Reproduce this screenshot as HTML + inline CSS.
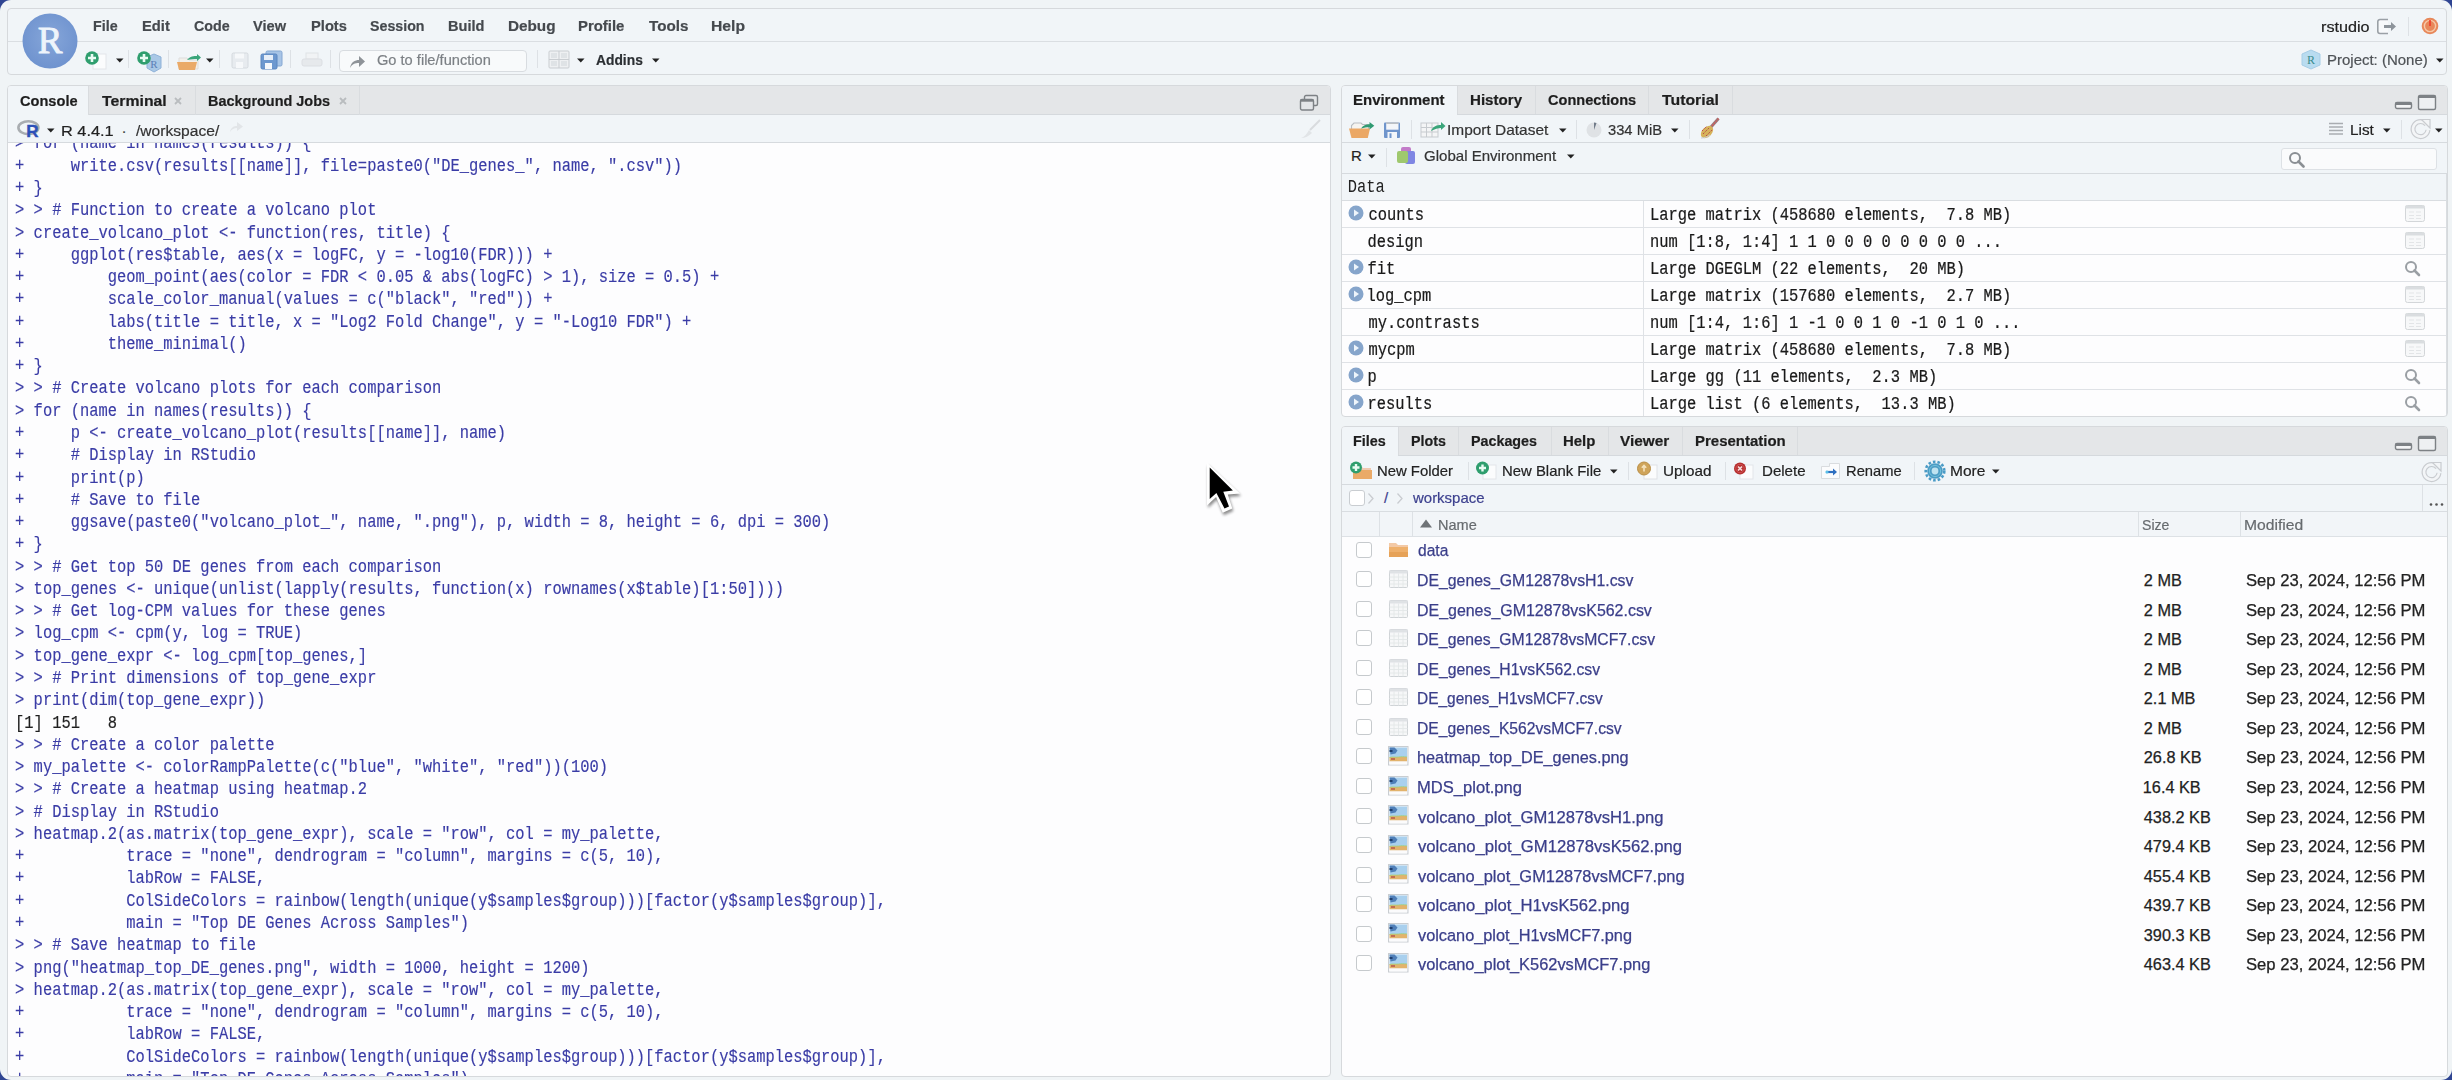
<!DOCTYPE html><html><head><meta charset="utf-8"><style>
html,body{margin:0;padding:0;}
body{width:2452px;height:1080px;overflow:hidden;position:relative;background:#2f4592;font-family:'Liberation Sans', sans-serif;}
.t{position:absolute;white-space:pre;}
</style></head><body><div style="position:absolute;left:0px;top:0px;width:2452px;height:1080px;background:#f0f4f6;border-radius:11px;"></div><div style="position:absolute;left:7px;top:8px;width:2440px;height:67px;background:#f1f5f8;border:1px solid #d6d9dc;border-radius:4px;box-sizing:border-box;"></div><div style="position:absolute;left:8px;top:41px;width:2438px;height:1px;background:#dadee2"></div><svg style="position:absolute;left:22px;top:13px" width="56" height="56" viewBox="0 0 56 56"><defs><radialGradient id="rg" cx="50%" cy="45%" r="55%"><stop offset="0" stop-color="#86a6d9"/><stop offset="1" stop-color="#6f93cf"/></radialGradient></defs>
<circle cx="28" cy="28" r="27.5" fill="url(#rg)"/>
<text x="28" y="40" text-anchor="middle" font-family="Liberation Serif" font-size="37" fill="#eef4fb" stroke="#eef4fb" stroke-width="0.8">R</text></svg><div class="t" style="left:93.38px;top:17.32px;font-size:15.5px;line-height:17.31px;font-weight:bold;color:#45494e;font-family:'Liberation Sans', sans-serif;letter-spacing:0px;transform:scale(0.9202,1.000);transform-origin:0 14.03px;-webkit-text-stroke:0.2px #45494e;">File</div><div class="t" style="left:142.05px;top:17.32px;font-size:15.5px;line-height:17.31px;font-weight:bold;color:#45494e;font-family:'Liberation Sans', sans-serif;letter-spacing:0px;transform:scale(0.9497,1.000);transform-origin:0 14.03px;-webkit-text-stroke:0.2px #45494e;">Edit</div><div class="t" style="left:193.60px;top:17.32px;font-size:15.5px;line-height:17.31px;font-weight:bold;color:#45494e;font-family:'Liberation Sans', sans-serif;letter-spacing:0px;transform:scale(0.9200,1.000);transform-origin:0 14.03px;-webkit-text-stroke:0.2px #45494e;">Code</div><div class="t" style="left:253.30px;top:17.32px;font-size:15.5px;line-height:17.31px;font-weight:bold;color:#45494e;font-family:'Liberation Sans', sans-serif;letter-spacing:0px;transform:scale(0.9421,1.000);transform-origin:0 14.03px;-webkit-text-stroke:0.2px #45494e;">View</div><div class="t" style="left:310.65px;top:17.32px;font-size:15.5px;line-height:17.31px;font-weight:bold;color:#45494e;font-family:'Liberation Sans', sans-serif;letter-spacing:0px;transform:scale(0.9483,1.000);transform-origin:0 14.03px;-webkit-text-stroke:0.2px #45494e;">Plots</div><div class="t" style="left:370.40px;top:17.32px;font-size:15.5px;line-height:17.31px;font-weight:bold;color:#45494e;font-family:'Liberation Sans', sans-serif;letter-spacing:0px;transform:scale(0.9174,1.000);transform-origin:0 14.03px;-webkit-text-stroke:0.2px #45494e;">Session</div><div class="t" style="left:447.96px;top:17.32px;font-size:15.5px;line-height:17.31px;font-weight:bold;color:#45494e;font-family:'Liberation Sans', sans-serif;letter-spacing:0px;transform:scale(0.9390,1.000);transform-origin:0 14.03px;-webkit-text-stroke:0.2px #45494e;">Build</div><div class="t" style="left:507.61px;top:17.32px;font-size:15.5px;line-height:17.31px;font-weight:bold;color:#45494e;font-family:'Liberation Sans', sans-serif;letter-spacing:0px;transform:scale(0.9861,1.000);transform-origin:0 14.03px;-webkit-text-stroke:0.2px #45494e;">Debug</div><div class="t" style="left:578.04px;top:17.32px;font-size:15.5px;line-height:17.31px;font-weight:bold;color:#45494e;font-family:'Liberation Sans', sans-serif;letter-spacing:0px;transform:scale(0.9598,1.000);transform-origin:0 14.03px;-webkit-text-stroke:0.2px #45494e;">Profile</div><div class="t" style="left:649.00px;top:17.32px;font-size:15.5px;line-height:17.31px;font-weight:bold;color:#45494e;font-family:'Liberation Sans', sans-serif;letter-spacing:0px;transform:scale(0.9808,1.000);transform-origin:0 14.03px;-webkit-text-stroke:0.2px #45494e;">Tools</div><div class="t" style="left:710.99px;top:17.32px;font-size:15.5px;line-height:17.31px;font-weight:bold;color:#45494e;font-family:'Liberation Sans', sans-serif;letter-spacing:0px;transform:scale(1.0118,1.000);transform-origin:0 14.03px;-webkit-text-stroke:0.2px #45494e;">Help</div><div class="t" style="left:2320.94px;top:18.30px;font-size:15.3px;line-height:17.09px;font-weight:normal;color:#222;font-family:'Liberation Sans', sans-serif;letter-spacing:0px;transform:scale(1.0584,1.000);transform-origin:0 13.85px;-webkit-text-stroke:0.2px #222;">rstudio</div><svg style="position:absolute;left:2376px;top:17px" width="22" height="19" viewBox="0 0 22 19"><path d="M12 2.5H4a2.2 2.2 0 0 0-2.2 2.2v9.6A2.2 2.2 0 0 0 4 16.5h8" fill="#f7f9fb" stroke="#9aa0a6" stroke-width="1.6"/><path d="M8 8h7V5l5 4.5-5 4.5v-3H8z" fill="#8d949b"/></svg><div style="position:absolute;left:2408px;top:17px;width:1px;height:19px;background:#dde1e5"></div><svg style="position:absolute;left:2421px;top:17px" width="18" height="18" viewBox="0 0 18 18"><circle cx="9" cy="9" r="8.3" fill="#e8885a"/><circle cx="9" cy="9" r="5.6" fill="none" stroke="#f6c9a8" stroke-width="1.4"/><rect x="8.2" y="3" width="1.6" height="6" fill="#f03a2a"/></svg><svg style="position:absolute;left:84px;top:50px" width="26" height="20" viewBox="0 0 26 20"><rect x="9" y="4" width="13" height="15" fill="#fbfcfd" stroke="#e3e6e9"/><circle cx="8" cy="8" r="6.8" fill="#2f9e6e"/><path d="M8 4v8M4 8h8" stroke="#e9fbf3" stroke-width="2.6"/></svg><svg style="position:absolute;left:116px;top:58px" width="8" height="5" viewBox="0 0 8 5"><path d="M0 0.5H7.5L3.75 4.5Z" fill="#222"/></svg><div style="position:absolute;left:128px;top:50px;width:1px;height:18px;background:#dde1e5"></div><svg style="position:absolute;left:136px;top:50px" width="28" height="23" viewBox="0 0 28 23"><path d="M11 7l7-3 7 3v11l-7 4-7-4z" fill="#a9c8e6" stroke="#8fb2d8"/><text x="18" y="18" font-family="Liberation Serif" font-size="11" fill="#5b7fb6" text-anchor="middle">R</text><circle cx="8" cy="8" r="6.8" fill="#2f9e6e"/><path d="M8 4v8M4 8h8" stroke="#e9fbf3" stroke-width="2.6"/></svg><div style="position:absolute;left:168px;top:50px;width:1px;height:18px;background:#dde1e5"></div><svg style="position:absolute;left:176px;top:51px" width="28" height="20" viewBox="0 0 28 20"><path d="M3 7h8l2 2h9v9H3z" fill="#f3f0ea" stroke="#ddd"/><path d="M1 11h20l-2 8H3z" fill="#eaaa68"/><path d="M11 9c3-4 7-4 10-4v-2l4 3.5-4 3.5v-2c-3 0-6 0-10 1z" fill="#3aa57a"/></svg><svg style="position:absolute;left:206px;top:58px" width="8" height="5" viewBox="0 0 8 5"><path d="M0 0.5H7.5L3.75 4.5Z" fill="#222"/></svg><div style="position:absolute;left:219px;top:50px;width:1px;height:18px;background:#dde1e5"></div><svg style="position:absolute;left:231px;top:52px" width="19" height="17" viewBox="0 0 19 17"><rect x="1" y="1" width="16" height="15" rx="1.5" fill="#e7ebef" stroke="#d4d9de"/><rect x="4" y="1.5" width="9" height="5" fill="#f6f8fa"/><rect x="5" y="10" width="7" height="6" fill="#f6f8fa"/></svg><svg style="position:absolute;left:260px;top:50px" width="24" height="20" viewBox="0 0 24 20"><rect x="6" y="1" width="16" height="15" rx="1.5" fill="#a7c4e6" stroke="#84a7d2"/><rect x="1" y="4" width="16" height="15" rx="1.5" fill="#6d98cf" stroke="#5a86c0"/><rect x="4" y="5" width="9" height="5" fill="#e6eef8"/><rect x="5" y="13" width="7" height="6" fill="#f5f8fc"/></svg><div style="position:absolute;left:290px;top:50px;width:1px;height:18px;background:#dde1e5"></div><svg style="position:absolute;left:301px;top:52px" width="22" height="17" viewBox="0 0 22 17"><rect x="5" y="1" width="12" height="6" fill="#f1f3f5" stroke="#e0e3e6"/><rect x="1" y="7" width="20" height="7" rx="2" fill="#e6e9ec" stroke="#dcdfe3"/></svg><div style="position:absolute;left:330px;top:50px;width:1px;height:18px;background:#dde1e5"></div><div style="position:absolute;left:339px;top:49.5px;width:188px;height:22px;background:#f8fafb;border:1px solid #d8dce0;border-radius:4px;box-sizing:border-box;"></div><svg style="position:absolute;left:348px;top:54px" width="18" height="15" viewBox="0 0 18 15"><path d="M2 14c1-6 5-8 9-8V2l6 5.5-6 5.5V9c-4 0-7 1-9 5z" fill="#8e9398"/></svg><div class="t" style="left:376.50px;top:52.23px;font-size:14.5px;line-height:16.20px;font-weight:normal;color:#7c8085;font-family:'Liberation Sans', sans-serif;letter-spacing:0px;transform:scale(1.0082,1.000);transform-origin:0 13.12px;-webkit-text-stroke:0.2px #7c8085;">Go to file/function</div><div style="position:absolute;left:537px;top:50px;width:1px;height:18px;background:#dde1e5"></div><svg style="position:absolute;left:548px;top:50px" width="22" height="19" viewBox="0 0 22 19"><rect x="1" y="1" width="20" height="17" rx="1" fill="#eef0f2" stroke="#c9cdd1"/><path d="M11 1v17M1 9.5h20" stroke="#c9cdd1"/><rect x="3" y="3" width="6" height="5" fill="#dfe3e6"/><rect x="13" y="3" width="6" height="5" fill="#dfe3e6"/><rect x="3" y="11" width="6" height="5" fill="#dfe3e6"/><rect x="13" y="11" width="6" height="5" fill="#dfe3e6"/></svg><svg style="position:absolute;left:577px;top:58px" width="8" height="5" viewBox="0 0 8 5"><path d="M0 0.5H7.5L3.75 4.5Z" fill="#222"/></svg><div class="t" style="left:596.30px;top:51.78px;font-size:15px;line-height:16.75px;font-weight:bold;color:#2b2f33;font-family:'Liberation Sans', sans-serif;letter-spacing:0px;transform:scale(0.9210,1.000);transform-origin:0 13.58px;-webkit-text-stroke:0.2px #2b2f33;">Addins</div><svg style="position:absolute;left:652px;top:58px" width="8" height="5" viewBox="0 0 8 5"><path d="M0 0.5H7.5L3.75 4.5Z" fill="#222"/></svg><svg style="position:absolute;left:2300px;top:49px" width="22" height="21" viewBox="0 0 22 21"><path d="M2 5l9-4 9 4v11l-9 4-9-4z" fill="#b9dcf0" stroke="#a6cde6"/><text x="11" y="15" font-family="Liberation Serif" font-size="12" fill="#3a8c8c" text-anchor="middle">R</text></svg><div class="t" style="left:2326.64px;top:53.00px;font-size:14.2px;line-height:15.86px;font-weight:normal;color:#4f5357;font-family:'Liberation Sans', sans-serif;letter-spacing:0px;transform:scale(1.0557,1.000);transform-origin:0 12.85px;-webkit-text-stroke:0.2px #4f5357;">Project: (None)</div><svg style="position:absolute;left:2436px;top:58px" width="8" height="5" viewBox="0 0 8 5"><path d="M0 0.5H7.5L3.75 4.5Z" fill="#222"/></svg><div style="position:absolute;left:7px;top:85px;width:1324px;height:992px;background:#fdfdfe;border:1px solid #d6d9dc;border-radius:4px;box-sizing:border-box;"></div><div style="position:absolute;left:8px;top:86px;width:1322px;height:29px;background:#e4e6e8;border-radius:3px 3px 0 0"></div><div style="position:absolute;left:8px;top:114px;width:1322px;height:1px;background:#d5d9dd"></div><div style="position:absolute;left:8px;top:86px;width:80px;height:29px;background:#f1f5f8;border-radius:3px 0 0 0"></div><div style="position:absolute;left:88px;top:86px;width:1px;height:29px;background:#d9dcdf"></div><div style="position:absolute;left:195px;top:86px;width:1px;height:29px;background:#d9dcdf"></div><div style="position:absolute;left:359px;top:86px;width:1px;height:29px;background:#d9dcdf"></div><div class="t" style="left:19.50px;top:92.63px;font-size:14.5px;line-height:16.20px;font-weight:bold;color:#1e1e1e;font-family:'Liberation Sans', sans-serif;letter-spacing:0px;transform:scale(1.0064,1.000);transform-origin:0 13.12px;-webkit-text-stroke:0.2px #1e1e1e;">Console</div><div class="t" style="left:102.00px;top:92.63px;font-size:14.5px;line-height:16.20px;font-weight:bold;color:#1e1e1e;font-family:'Liberation Sans', sans-serif;letter-spacing:0px;transform:scale(1.0903,1.000);transform-origin:0 13.12px;-webkit-text-stroke:0.2px #1e1e1e;">Terminal</div><div class="t" style="left:208.00px;top:92.63px;font-size:14.5px;line-height:16.20px;font-weight:bold;color:#1e1e1e;font-family:'Liberation Sans', sans-serif;letter-spacing:0px;transform:scale(0.9967,1.000);transform-origin:0 13.12px;-webkit-text-stroke:0.2px #1e1e1e;">Background Jobs</div><svg style="position:absolute;left:174px;top:97px" width="8" height="8" viewBox="0 0 8 8"><path d="M1 1L7 7M7 1L1 7" stroke="#b9bcbf" stroke-width="1.8"/></svg><svg style="position:absolute;left:339px;top:97px" width="8" height="8" viewBox="0 0 8 8"><path d="M1 1L7 7M7 1L1 7" stroke="#b9bcbf" stroke-width="1.8"/></svg><svg style="position:absolute;left:1299px;top:94px" width="20" height="18" viewBox="0 0 20 18"><rect x="5.5" y="1.5" width="13" height="10" rx="1.5" fill="none" stroke="#7d8185" stroke-width="1.4"/><rect x="1.5" y="5.5" width="13" height="10.5" rx="1.5" fill="#e3e5e8" stroke="#7d8185" stroke-width="1.4"/><rect x="1.5" y="5.5" width="13" height="2.2" fill="#7d8185"/></svg><div style="position:absolute;left:8px;top:115px;width:1322px;height:28px;background:#f1f5f8"></div><div style="position:absolute;left:8px;top:142px;width:1322px;height:1px;background:#d6dade"></div><svg style="position:absolute;left:17px;top:119px" width="26" height="21" viewBox="0 0 26 21"><ellipse cx="11.4" cy="8.7" rx="10" ry="6.4" fill="none" stroke="#a9adb1" stroke-width="2.6"/><text x="15.3" y="18" font-family="Liberation Sans" font-weight="bold" font-size="17" fill="#2d50b8" text-anchor="middle" stroke="#2d50b8" stroke-width="0.4">R</text></svg><svg style="position:absolute;left:47px;top:128px" width="8" height="5" viewBox="0 0 8 5"><path d="M0 0.5H7.5L3.75 4.5Z" fill="#222"/></svg><div class="t" style="left:60.94px;top:122.01px;font-size:15.4px;line-height:17.20px;font-weight:normal;color:#222;font-family:'Liberation Sans', sans-serif;letter-spacing:0px;transform:scale(1.0611,1.000);transform-origin:0 13.94px;-webkit-text-stroke:0.2px #222;">R 4.4.1</div><div class="t" style="left:121.50px;top:122.01px;font-size:15.4px;line-height:17.20px;font-weight:normal;color:#444;font-family:'Liberation Sans', sans-serif;letter-spacing:0px;-webkit-text-stroke:0.2px #444;">·</div><div class="t" style="left:136.00px;top:122.01px;font-size:15.4px;line-height:17.20px;font-weight:normal;color:#333;font-family:'Liberation Sans', sans-serif;letter-spacing:0px;transform:scale(1.0140,1.000);transform-origin:0 13.94px;-webkit-text-stroke:0.2px #333;">/workspace/</div><svg style="position:absolute;left:229px;top:121px" width="15" height="12" viewBox="0 0 15 12"><path d="M1 11c1-5 4-6 7-6V1l6 4.5-6 4.5V7c-3 0-5 1-7 4z" fill="#e2e5e8"/></svg><svg style="position:absolute;left:1298px;top:118px" width="24" height="22" viewBox="0 0 24 22"><path d="M22 2L12 12" stroke="#d8dbde" stroke-width="2"/><path d="M3 20c3-1 6-4 8-8l3 3c-3 3-7 5-11 5z" fill="#e1e4e7"/></svg><div style="position:absolute;left:8px;top:143px;width:1322px;height:933px;overflow:hidden"><div class="t" style="left:7.1px;top:-6.60px;font-family:'Liberation Mono', monospace;font-size:15.44px;line-height:17.49px;color:#3a3ca6;transform:scaleY(1.13);transform-origin:0 12.85px;-webkit-text-stroke:0.15px #3a3ca6">&gt; for (name in names(results)) {</div><div class="t" style="left:7.1px;top:15.67px;font-family:'Liberation Mono', monospace;font-size:15.44px;line-height:17.49px;color:#3a3ca6;transform:scaleY(1.13);transform-origin:0 12.85px;-webkit-text-stroke:0.15px #3a3ca6">+     write.csv(results[[name]], file=paste0(&quot;DE_genes_&quot;, name, &quot;.csv&quot;))</div><div class="t" style="left:7.1px;top:37.95px;font-family:'Liberation Mono', monospace;font-size:15.44px;line-height:17.49px;color:#3a3ca6;transform:scaleY(1.13);transform-origin:0 12.85px;-webkit-text-stroke:0.15px #3a3ca6">+ }</div><div class="t" style="left:7.1px;top:60.22px;font-family:'Liberation Mono', monospace;font-size:15.44px;line-height:17.49px;color:#3a3ca6;transform:scaleY(1.13);transform-origin:0 12.85px;-webkit-text-stroke:0.15px #3a3ca6">&gt; &gt; # Function to create a volcano plot</div><div class="t" style="left:7.1px;top:82.50px;font-family:'Liberation Mono', monospace;font-size:15.44px;line-height:17.49px;color:#3a3ca6;transform:scaleY(1.13);transform-origin:0 12.85px;-webkit-text-stroke:0.15px #3a3ca6">&gt; create_volcano_plot &lt;- function(res, title) {</div><div class="t" style="left:7.1px;top:104.77px;font-family:'Liberation Mono', monospace;font-size:15.44px;line-height:17.49px;color:#3a3ca6;transform:scaleY(1.13);transform-origin:0 12.85px;-webkit-text-stroke:0.15px #3a3ca6">+     ggplot(res$table, aes(x = logFC, y = -log10(FDR))) +</div><div class="t" style="left:7.1px;top:127.05px;font-family:'Liberation Mono', monospace;font-size:15.44px;line-height:17.49px;color:#3a3ca6;transform:scaleY(1.13);transform-origin:0 12.85px;-webkit-text-stroke:0.15px #3a3ca6">+         geom_point(aes(color = FDR &lt; 0.05 &amp; abs(logFC) &gt; 1), size = 0.5) +</div><div class="t" style="left:7.1px;top:149.32px;font-family:'Liberation Mono', monospace;font-size:15.44px;line-height:17.49px;color:#3a3ca6;transform:scaleY(1.13);transform-origin:0 12.85px;-webkit-text-stroke:0.15px #3a3ca6">+         scale_color_manual(values = c(&quot;black&quot;, &quot;red&quot;)) +</div><div class="t" style="left:7.1px;top:171.60px;font-family:'Liberation Mono', monospace;font-size:15.44px;line-height:17.49px;color:#3a3ca6;transform:scaleY(1.13);transform-origin:0 12.85px;-webkit-text-stroke:0.15px #3a3ca6">+         labs(title = title, x = &quot;Log2 Fold Change&quot;, y = &quot;-Log10 FDR&quot;) +</div><div class="t" style="left:7.1px;top:193.87px;font-family:'Liberation Mono', monospace;font-size:15.44px;line-height:17.49px;color:#3a3ca6;transform:scaleY(1.13);transform-origin:0 12.85px;-webkit-text-stroke:0.15px #3a3ca6">+         theme_minimal()</div><div class="t" style="left:7.1px;top:216.15px;font-family:'Liberation Mono', monospace;font-size:15.44px;line-height:17.49px;color:#3a3ca6;transform:scaleY(1.13);transform-origin:0 12.85px;-webkit-text-stroke:0.15px #3a3ca6">+ }</div><div class="t" style="left:7.1px;top:238.42px;font-family:'Liberation Mono', monospace;font-size:15.44px;line-height:17.49px;color:#3a3ca6;transform:scaleY(1.13);transform-origin:0 12.85px;-webkit-text-stroke:0.15px #3a3ca6">&gt; &gt; # Create volcano plots for each comparison</div><div class="t" style="left:7.1px;top:260.70px;font-family:'Liberation Mono', monospace;font-size:15.44px;line-height:17.49px;color:#3a3ca6;transform:scaleY(1.13);transform-origin:0 12.85px;-webkit-text-stroke:0.15px #3a3ca6">&gt; for (name in names(results)) {</div><div class="t" style="left:7.1px;top:282.97px;font-family:'Liberation Mono', monospace;font-size:15.44px;line-height:17.49px;color:#3a3ca6;transform:scaleY(1.13);transform-origin:0 12.85px;-webkit-text-stroke:0.15px #3a3ca6">+     p &lt;- create_volcano_plot(results[[name]], name)</div><div class="t" style="left:7.1px;top:305.25px;font-family:'Liberation Mono', monospace;font-size:15.44px;line-height:17.49px;color:#3a3ca6;transform:scaleY(1.13);transform-origin:0 12.85px;-webkit-text-stroke:0.15px #3a3ca6">+     # Display in RStudio</div><div class="t" style="left:7.1px;top:327.52px;font-family:'Liberation Mono', monospace;font-size:15.44px;line-height:17.49px;color:#3a3ca6;transform:scaleY(1.13);transform-origin:0 12.85px;-webkit-text-stroke:0.15px #3a3ca6">+     print(p)</div><div class="t" style="left:7.1px;top:349.80px;font-family:'Liberation Mono', monospace;font-size:15.44px;line-height:17.49px;color:#3a3ca6;transform:scaleY(1.13);transform-origin:0 12.85px;-webkit-text-stroke:0.15px #3a3ca6">+     # Save to file</div><div class="t" style="left:7.1px;top:372.07px;font-family:'Liberation Mono', monospace;font-size:15.44px;line-height:17.49px;color:#3a3ca6;transform:scaleY(1.13);transform-origin:0 12.85px;-webkit-text-stroke:0.15px #3a3ca6">+     ggsave(paste0(&quot;volcano_plot_&quot;, name, &quot;.png&quot;), p, width = 8, height = 6, dpi = 300)</div><div class="t" style="left:7.1px;top:394.35px;font-family:'Liberation Mono', monospace;font-size:15.44px;line-height:17.49px;color:#3a3ca6;transform:scaleY(1.13);transform-origin:0 12.85px;-webkit-text-stroke:0.15px #3a3ca6">+ }</div><div class="t" style="left:7.1px;top:416.62px;font-family:'Liberation Mono', monospace;font-size:15.44px;line-height:17.49px;color:#3a3ca6;transform:scaleY(1.13);transform-origin:0 12.85px;-webkit-text-stroke:0.15px #3a3ca6">&gt; &gt; # Get top 50 DE genes from each comparison</div><div class="t" style="left:7.1px;top:438.90px;font-family:'Liberation Mono', monospace;font-size:15.44px;line-height:17.49px;color:#3a3ca6;transform:scaleY(1.13);transform-origin:0 12.85px;-webkit-text-stroke:0.15px #3a3ca6">&gt; top_genes &lt;- unique(unlist(lapply(results, function(x) rownames(x$table)[1:50])))</div><div class="t" style="left:7.1px;top:461.17px;font-family:'Liberation Mono', monospace;font-size:15.44px;line-height:17.49px;color:#3a3ca6;transform:scaleY(1.13);transform-origin:0 12.85px;-webkit-text-stroke:0.15px #3a3ca6">&gt; &gt; # Get log-CPM values for these genes</div><div class="t" style="left:7.1px;top:483.45px;font-family:'Liberation Mono', monospace;font-size:15.44px;line-height:17.49px;color:#3a3ca6;transform:scaleY(1.13);transform-origin:0 12.85px;-webkit-text-stroke:0.15px #3a3ca6">&gt; log_cpm &lt;- cpm(y, log = TRUE)</div><div class="t" style="left:7.1px;top:505.72px;font-family:'Liberation Mono', monospace;font-size:15.44px;line-height:17.49px;color:#3a3ca6;transform:scaleY(1.13);transform-origin:0 12.85px;-webkit-text-stroke:0.15px #3a3ca6">&gt; top_gene_expr &lt;- log_cpm[top_genes,]</div><div class="t" style="left:7.1px;top:528.00px;font-family:'Liberation Mono', monospace;font-size:15.44px;line-height:17.49px;color:#3a3ca6;transform:scaleY(1.13);transform-origin:0 12.85px;-webkit-text-stroke:0.15px #3a3ca6">&gt; &gt; # Print dimensions of top_gene_expr</div><div class="t" style="left:7.1px;top:550.27px;font-family:'Liberation Mono', monospace;font-size:15.44px;line-height:17.49px;color:#3a3ca6;transform:scaleY(1.13);transform-origin:0 12.85px;-webkit-text-stroke:0.15px #3a3ca6">&gt; print(dim(top_gene_expr))</div><div class="t" style="left:7.1px;top:572.55px;font-family:'Liberation Mono', monospace;font-size:15.44px;line-height:17.49px;color:#1f1f1f;transform:scaleY(1.13);transform-origin:0 12.85px;-webkit-text-stroke:0.15px #1f1f1f">[1] 151   8</div><div class="t" style="left:7.1px;top:594.82px;font-family:'Liberation Mono', monospace;font-size:15.44px;line-height:17.49px;color:#3a3ca6;transform:scaleY(1.13);transform-origin:0 12.85px;-webkit-text-stroke:0.15px #3a3ca6">&gt; &gt; # Create a color palette</div><div class="t" style="left:7.1px;top:617.10px;font-family:'Liberation Mono', monospace;font-size:15.44px;line-height:17.49px;color:#3a3ca6;transform:scaleY(1.13);transform-origin:0 12.85px;-webkit-text-stroke:0.15px #3a3ca6">&gt; my_palette &lt;- colorRampPalette(c(&quot;blue&quot;, &quot;white&quot;, &quot;red&quot;))(100)</div><div class="t" style="left:7.1px;top:639.37px;font-family:'Liberation Mono', monospace;font-size:15.44px;line-height:17.49px;color:#3a3ca6;transform:scaleY(1.13);transform-origin:0 12.85px;-webkit-text-stroke:0.15px #3a3ca6">&gt; &gt; # Create a heatmap using heatmap.2</div><div class="t" style="left:7.1px;top:661.65px;font-family:'Liberation Mono', monospace;font-size:15.44px;line-height:17.49px;color:#3a3ca6;transform:scaleY(1.13);transform-origin:0 12.85px;-webkit-text-stroke:0.15px #3a3ca6">&gt; # Display in RStudio</div><div class="t" style="left:7.1px;top:683.92px;font-family:'Liberation Mono', monospace;font-size:15.44px;line-height:17.49px;color:#3a3ca6;transform:scaleY(1.13);transform-origin:0 12.85px;-webkit-text-stroke:0.15px #3a3ca6">&gt; heatmap.2(as.matrix(top_gene_expr), scale = &quot;row&quot;, col = my_palette,</div><div class="t" style="left:7.1px;top:706.20px;font-family:'Liberation Mono', monospace;font-size:15.44px;line-height:17.49px;color:#3a3ca6;transform:scaleY(1.13);transform-origin:0 12.85px;-webkit-text-stroke:0.15px #3a3ca6">+           trace = &quot;none&quot;, dendrogram = &quot;column&quot;, margins = c(5, 10),</div><div class="t" style="left:7.1px;top:728.47px;font-family:'Liberation Mono', monospace;font-size:15.44px;line-height:17.49px;color:#3a3ca6;transform:scaleY(1.13);transform-origin:0 12.85px;-webkit-text-stroke:0.15px #3a3ca6">+           labRow = FALSE,</div><div class="t" style="left:7.1px;top:750.75px;font-family:'Liberation Mono', monospace;font-size:15.44px;line-height:17.49px;color:#3a3ca6;transform:scaleY(1.13);transform-origin:0 12.85px;-webkit-text-stroke:0.15px #3a3ca6">+           ColSideColors = rainbow(length(unique(y$samples$group)))[factor(y$samples$group)],</div><div class="t" style="left:7.1px;top:773.02px;font-family:'Liberation Mono', monospace;font-size:15.44px;line-height:17.49px;color:#3a3ca6;transform:scaleY(1.13);transform-origin:0 12.85px;-webkit-text-stroke:0.15px #3a3ca6">+           main = &quot;Top DE Genes Across Samples&quot;)</div><div class="t" style="left:7.1px;top:795.30px;font-family:'Liberation Mono', monospace;font-size:15.44px;line-height:17.49px;color:#3a3ca6;transform:scaleY(1.13);transform-origin:0 12.85px;-webkit-text-stroke:0.15px #3a3ca6">&gt; &gt; # Save heatmap to file</div><div class="t" style="left:7.1px;top:817.57px;font-family:'Liberation Mono', monospace;font-size:15.44px;line-height:17.49px;color:#3a3ca6;transform:scaleY(1.13);transform-origin:0 12.85px;-webkit-text-stroke:0.15px #3a3ca6">&gt; png(&quot;heatmap_top_DE_genes.png&quot;, width = 1000, height = 1200)</div><div class="t" style="left:7.1px;top:839.85px;font-family:'Liberation Mono', monospace;font-size:15.44px;line-height:17.49px;color:#3a3ca6;transform:scaleY(1.13);transform-origin:0 12.85px;-webkit-text-stroke:0.15px #3a3ca6">&gt; heatmap.2(as.matrix(top_gene_expr), scale = &quot;row&quot;, col = my_palette,</div><div class="t" style="left:7.1px;top:862.12px;font-family:'Liberation Mono', monospace;font-size:15.44px;line-height:17.49px;color:#3a3ca6;transform:scaleY(1.13);transform-origin:0 12.85px;-webkit-text-stroke:0.15px #3a3ca6">+           trace = &quot;none&quot;, dendrogram = &quot;column&quot;, margins = c(5, 10),</div><div class="t" style="left:7.1px;top:884.40px;font-family:'Liberation Mono', monospace;font-size:15.44px;line-height:17.49px;color:#3a3ca6;transform:scaleY(1.13);transform-origin:0 12.85px;-webkit-text-stroke:0.15px #3a3ca6">+           labRow = FALSE,</div><div class="t" style="left:7.1px;top:906.67px;font-family:'Liberation Mono', monospace;font-size:15.44px;line-height:17.49px;color:#3a3ca6;transform:scaleY(1.13);transform-origin:0 12.85px;-webkit-text-stroke:0.15px #3a3ca6">+           ColSideColors = rainbow(length(unique(y$samples$group)))[factor(y$samples$group)],</div><div class="t" style="left:7.1px;top:928.95px;font-family:'Liberation Mono', monospace;font-size:15.44px;line-height:17.49px;color:#3a3ca6;transform:scaleY(1.13);transform-origin:0 12.85px;-webkit-text-stroke:0.15px #3a3ca6">+           main = &quot;Top DE Genes Across Samples&quot;)</div></div><div style="position:absolute;left:1341px;top:85px;width:1107px;height:332px;background:#fdfdfe;border:1px solid #d6d9dc;border-radius:4px;box-sizing:border-box;"></div><div style="position:absolute;left:1342px;top:86px;width:1105px;height:28px;background:#e4e6e8;border-radius:3px 3px 0 0"></div><div style="position:absolute;left:1342px;top:114px;width:1105px;height:1px;background:#d5d9dd"></div><div style="position:absolute;left:1342px;top:86px;width:115px;height:29px;background:#f1f5f8;border-radius:3px 0 0 0"></div><div style="position:absolute;left:1457px;top:86px;width:1px;height:28px;background:#d9dcdf"></div><div style="position:absolute;left:1535px;top:86px;width:1px;height:28px;background:#d9dcdf"></div><div style="position:absolute;left:1648px;top:86px;width:1px;height:28px;background:#d9dcdf"></div><div style="position:absolute;left:1732px;top:86px;width:1px;height:28px;background:#d9dcdf"></div><div class="t" style="left:1353.30px;top:92.33px;font-size:14.5px;line-height:16.20px;font-weight:bold;color:#1e1e1e;font-family:'Liberation Sans', sans-serif;letter-spacing:0px;transform:scale(1.0327,1.000);transform-origin:0 13.12px;-webkit-text-stroke:0.2px #1e1e1e;">Environment</div><div class="t" style="left:1470.20px;top:92.33px;font-size:14.5px;line-height:16.20px;font-weight:bold;color:#1e1e1e;font-family:'Liberation Sans', sans-serif;letter-spacing:0px;transform:scale(1.0422,1.000);transform-origin:0 13.12px;-webkit-text-stroke:0.2px #1e1e1e;">History</div><div class="t" style="left:1547.90px;top:92.33px;font-size:14.5px;line-height:16.20px;font-weight:bold;color:#1e1e1e;font-family:'Liberation Sans', sans-serif;letter-spacing:0px;transform:scale(1.0041,1.000);transform-origin:0 13.12px;-webkit-text-stroke:0.2px #1e1e1e;">Connections</div><div class="t" style="left:1662.30px;top:92.33px;font-size:14.5px;line-height:16.20px;font-weight:bold;color:#1e1e1e;font-family:'Liberation Sans', sans-serif;letter-spacing:0px;transform:scale(1.0909,1.000);transform-origin:0 13.12px;-webkit-text-stroke:0.2px #1e1e1e;">Tutorial</div><svg style="position:absolute;left:2394px;top:94px" width="44" height="18" viewBox="0 0 44 18"><rect x="1.5" y="8.5" width="16" height="6" rx="1.5" fill="#f4f5f6" stroke="#7d8185" stroke-width="1.4"/><rect x="1.5" y="8.5" width="16" height="2.5" fill="#7d8185"/><rect x="24.5" y="1.5" width="17" height="14" rx="1.5" fill="#eef0f2" stroke="#7d8185" stroke-width="1.4"/><rect x="24.5" y="1.5" width="17" height="2.5" fill="#7d8185"/></svg><div style="position:absolute;left:1342px;top:115px;width:1105px;height:28px;background:#f1f5f8"></div><div style="position:absolute;left:1342px;top:142px;width:1105px;height:1px;background:#d6dade"></div><svg style="position:absolute;left:1348px;top:120px" width="27" height="19" viewBox="0 0 27 19"><path d="M3.5 11V5.5L6 3h7l1.5 1.5h6V11" fill="#f6f4f0" stroke="#b9bdc1" stroke-width="1.1"/><path d="M1 8.5h21l-2.2 9.5H3.5z" fill="#eba866"/><path d="M13 8.5c2-3 5-4.2 8.5-4.2V2l4.8 3.8-4.8 3.8V7.3c-3 0-5.5 0.4-8.5 1.2z" fill="#2f9a72"/></svg><svg style="position:absolute;left:1383px;top:121px" width="18" height="18" viewBox="0 0 18 18"><rect x="1" y="1.5" width="16" height="15.5" rx="1" fill="#6f95cc"/><rect x="3.2" y="1.5" width="12.3" height="7.2" fill="#f4f6f9"/><rect x="3.2" y="1.5" width="12.3" height="1.2" fill="#a3a8ad"/><rect x="4.5" y="11" width="9.5" height="6" fill="#f3f6fa"/><rect x="6.5" y="12.3" width="2" height="4.7" fill="#6f95cc"/></svg><div style="position:absolute;left:1411px;top:120px;width:1px;height:19px;background:#dde1e5"></div><svg style="position:absolute;left:1420px;top:121px" width="26" height="17" viewBox="0 0 26 17"><rect x="1" y="2" width="17" height="14" fill="#f4f5f6" stroke="#c7cbcf"/><path d="M1 6.5h17M1 11h17M6.5 2v14M12 2v14" stroke="#c7cbcf"/><path d="M11 10c2-5 6-6 10-6V1l4.5 4-4.5 4V7c-3 0-6 1-10 3z" fill="#3aa57a"/></svg><div class="t" style="left:1447.47px;top:121.67px;font-size:15px;line-height:16.75px;font-weight:normal;color:#333;font-family:'Liberation Sans', sans-serif;letter-spacing:0px;transform:scale(1.0295,1.000);transform-origin:0 13.58px;-webkit-text-stroke:0.2px #333;">Import Dataset</div><svg style="position:absolute;left:1559px;top:128px" width="8" height="5" viewBox="0 0 8 5"><path d="M0 0.5H7.5L3.75 4.5Z" fill="#222"/></svg><div style="position:absolute;left:1576px;top:120px;width:1px;height:19px;background:#dde1e5"></div><svg style="position:absolute;left:1586px;top:122px" width="16" height="16" viewBox="0 0 16 16"><circle cx="8" cy="8" r="7.5" fill="#dfe2e5"/><path d="M8 8V0.5A7.5 7.5 0 0 1 10.5 0.9z" fill="#6f7a88"/></svg><div class="t" style="left:1608.00px;top:121.67px;font-size:15px;line-height:16.75px;font-weight:normal;color:#333;font-family:'Liberation Sans', sans-serif;letter-spacing:0px;transform:scale(0.9814,1.000);transform-origin:0 13.58px;-webkit-text-stroke:0.2px #333;">334 MiB</div><svg style="position:absolute;left:1671px;top:128px" width="8" height="5" viewBox="0 0 8 5"><path d="M0 0.5H7.5L3.75 4.5Z" fill="#222"/></svg><div style="position:absolute;left:1689px;top:120px;width:1px;height:19px;background:#dde1e5"></div><svg style="position:absolute;left:1698px;top:117px" width="24" height="23" viewBox="0 0 24 23"><path d="M20.5 1.5L13 10" stroke="#9a7a7a" stroke-width="3"/><path d="M20.5 1.5L13 10" stroke="#d65a5a" stroke-width="1.4" stroke-dasharray="1.5 1.2"/><ellipse cx="9" cy="15" rx="7.2" ry="4.8" transform="rotate(-45 9 15)" fill="#d6b25a"/><path d="M5 17l6-6M8 19l6-6M4 14l5-5" stroke="#b8404a" stroke-width="1" stroke-dasharray="1.3 1"/><path d="M3 21c3 0 6-1 9-3" stroke="#c9ccd0" stroke-width="1" fill="none"/></svg><svg style="position:absolute;left:2328px;top:122px" width="16" height="14" viewBox="0 0 16 14"><path d="M1 1.5h14M1 5h14M1 8.5h14M1 12h14" stroke="#a9adb1" stroke-width="1.3"/></svg><div class="t" style="left:2350.28px;top:121.67px;font-size:15px;line-height:16.75px;font-weight:normal;color:#222;font-family:'Liberation Sans', sans-serif;letter-spacing:0px;transform:scale(1.0183,1.000);transform-origin:0 13.58px;-webkit-text-stroke:0.2px #222;">List</div><svg style="position:absolute;left:2383px;top:128px" width="8" height="5" viewBox="0 0 8 5"><path d="M0 0.5H7.5L3.75 4.5Z" fill="#222"/></svg><div style="position:absolute;left:2401px;top:120px;width:1px;height:19px;background:#dde1e5"></div><svg style="position:absolute;left:2410px;top:118px" width="22" height="22" viewBox="0 0 22 22"><path d="M16.5 6.5A7.5 7.5 0 1 0 18 12" fill="none" stroke="#c9ccd0" stroke-width="5"/><path d="M16.5 6.5A7.5 7.5 0 1 0 18 12" fill="none" stroke="#f3f5f7" stroke-width="2.6"/><path d="M11.5 1.5h8.5v8.5z" fill="#f3f5f7" stroke="#c9ccd0" stroke-width="1.2"/></svg><svg style="position:absolute;left:2435px;top:128px" width="8" height="5" viewBox="0 0 8 5"><path d="M0 0.5H7.5L3.75 4.5Z" fill="#222"/></svg><div style="position:absolute;left:1342px;top:143px;width:1105px;height:30px;background:#f1f5f8"></div><div style="position:absolute;left:1342px;top:173px;width:1105px;height:1px;background:#d6dade"></div><div class="t" style="left:1351.00px;top:147.88px;font-size:15px;line-height:16.75px;font-weight:normal;color:#222;font-family:'Liberation Sans', sans-serif;letter-spacing:0px;-webkit-text-stroke:0.2px #222;">R</div><svg style="position:absolute;left:1368px;top:154px" width="8" height="5" viewBox="0 0 8 5"><path d="M0 0.5H7.5L3.75 4.5Z" fill="#222"/></svg><div style="position:absolute;left:1386px;top:148px;width:1px;height:19px;background:#dde1e5"></div><svg style="position:absolute;left:1396px;top:146px" width="22" height="20" viewBox="0 0 22 20"><rect x="5" y="1" width="10" height="13" rx="2" fill="#c27bc9"/><rect x="9" y="5" width="10" height="13" rx="2" fill="#7f86e3"/><rect x="1" y="5" width="11" height="12" rx="2" fill="#9fc86e"/></svg><div class="t" style="left:1424.00px;top:147.88px;font-size:15px;line-height:16.75px;font-weight:normal;color:#333;font-family:'Liberation Sans', sans-serif;letter-spacing:0px;transform:scale(1.0033,1.000);transform-origin:0 13.58px;-webkit-text-stroke:0.2px #333;">Global Environment</div><svg style="position:absolute;left:1567px;top:154px" width="8" height="5" viewBox="0 0 8 5"><path d="M0 0.5H7.5L3.75 4.5Z" fill="#222"/></svg><div style="position:absolute;left:2281px;top:147.5px;width:156px;height:22.5px;background:#fafbfc;border:1px solid #dde1e5;border-radius:3px;box-sizing:border-box"></div><svg style="position:absolute;left:2288px;top:151px" width="18" height="17" viewBox="0 0 18 17"><circle cx="7" cy="7" r="5" fill="none" stroke="#8a8f94" stroke-width="2"/><path d="M10.5 10.5L15.5 15.5" stroke="#8a8f94" stroke-width="2.6" stroke-linecap="round"/></svg><div style="position:absolute;left:1342px;top:174px;width:1104px;height:26px;background:#f1f5f8"></div><div style="position:absolute;left:1342px;top:200px;width:1104px;height:1px;background:#d9dde1"></div><div class="t" style="left:1347.70px;top:179.50px;font-size:15.44px;line-height:17.49px;font-weight:normal;color:#222;font-family:'Liberation Mono', monospace;letter-spacing:0px;transform:scale(1.0000,1.130);transform-origin:0 12.85px;">Data</div><div style="position:absolute;left:1342px;top:227px;width:1104px;height:1px;background:#dfe2e6"></div><svg style="position:absolute;left:1347.5px;top:205px" width="16" height="16" viewBox="0 0 16 16"><circle cx="8" cy="8" r="7.5" fill="#86a5cb"/><path d="M6 4.5L11 8L6 11.5z" fill="#eef5fb"/></svg><div class="t" style="left:1368.50px;top:207.97px;font-size:15.44px;line-height:17.49px;font-weight:normal;color:#1a1a1a;font-family:'Liberation Mono', monospace;letter-spacing:0px;transform:scale(1.0000,1.130);transform-origin:0 12.85px;-webkit-text-stroke:0.2px #1a1a1a;">counts</div><div class="t" style="left:1650.00px;top:207.97px;font-size:15.44px;line-height:17.49px;font-weight:normal;color:#1a1a1a;font-family:'Liberation Mono', monospace;letter-spacing:0px;transform:scale(1.0000,1.130);transform-origin:0 12.85px;-webkit-text-stroke:0.2px #1a1a1a;">Large matrix (458680 elements,  7.8 MB)</div><svg style="position:absolute;left:2405px;top:205px" width="20" height="17" viewBox="0 0 20 17"><rect x="0.5" y="0.5" width="19" height="16" rx="2" fill="#f7f8f9" stroke="#d3d6d9"/><rect x="0.5" y="0.5" width="19" height="3" fill="#dadde0"/><path d="M4 7h5M11 7h5M4 10.5h5M11 10.5h5M4 13.5h5M11 13.5h5" stroke="#e3e5e7"/></svg><div style="position:absolute;left:1342px;top:254px;width:1104px;height:1px;background:#dfe2e6"></div><div class="t" style="left:1367.50px;top:234.91px;font-size:15.44px;line-height:17.49px;font-weight:normal;color:#1a1a1a;font-family:'Liberation Mono', monospace;letter-spacing:0px;transform:scale(1.0000,1.130);transform-origin:0 12.85px;-webkit-text-stroke:0.2px #1a1a1a;">design</div><div class="t" style="left:1650.00px;top:234.91px;font-size:15.44px;line-height:17.49px;font-weight:normal;color:#1a1a1a;font-family:'Liberation Mono', monospace;letter-spacing:0px;transform:scale(1.0000,1.130);transform-origin:0 12.85px;-webkit-text-stroke:0.2px #1a1a1a;">num [1:8, 1:4] 1 1 0 0 0 0 0 0 0 0 ...</div><svg style="position:absolute;left:2405px;top:232px" width="20" height="17" viewBox="0 0 20 17"><rect x="0.5" y="0.5" width="19" height="16" rx="2" fill="#f7f8f9" stroke="#d3d6d9"/><rect x="0.5" y="0.5" width="19" height="3" fill="#dadde0"/><path d="M4 7h5M11 7h5M4 10.5h5M11 10.5h5M4 13.5h5M11 13.5h5" stroke="#e3e5e7"/></svg><div style="position:absolute;left:1342px;top:281px;width:1104px;height:1px;background:#dfe2e6"></div><svg style="position:absolute;left:1347.5px;top:259px" width="16" height="16" viewBox="0 0 16 16"><circle cx="8" cy="8" r="7.5" fill="#86a5cb"/><path d="M6 4.5L11 8L6 11.5z" fill="#eef5fb"/></svg><div class="t" style="left:1367.50px;top:261.85px;font-size:15.44px;line-height:17.49px;font-weight:normal;color:#1a1a1a;font-family:'Liberation Mono', monospace;letter-spacing:0px;transform:scale(1.0000,1.130);transform-origin:0 12.85px;-webkit-text-stroke:0.2px #1a1a1a;">fit</div><div class="t" style="left:1650.00px;top:261.85px;font-size:15.44px;line-height:17.49px;font-weight:normal;color:#1a1a1a;font-family:'Liberation Mono', monospace;letter-spacing:0px;transform:scale(1.0000,1.130);transform-origin:0 12.85px;-webkit-text-stroke:0.2px #1a1a1a;">Large DGEGLM (22 elements,  20 MB)</div><svg style="position:absolute;left:2404px;top:260px" width="18" height="18" viewBox="0 0 18 18"><circle cx="7" cy="7" r="5" fill="none" stroke="#9a9fa4" stroke-width="2"/><path d="M10.5 10.5L15 15" stroke="#9a9fa4" stroke-width="2.6" stroke-linecap="round"/></svg><div style="position:absolute;left:1342px;top:308px;width:1104px;height:1px;background:#dfe2e6"></div><svg style="position:absolute;left:1347.5px;top:286px" width="16" height="16" viewBox="0 0 16 16"><circle cx="8" cy="8" r="7.5" fill="#86a5cb"/><path d="M6 4.5L11 8L6 11.5z" fill="#eef5fb"/></svg><div class="t" style="left:1366.50px;top:288.79px;font-size:15.44px;line-height:17.49px;font-weight:normal;color:#1a1a1a;font-family:'Liberation Mono', monospace;letter-spacing:0px;transform:scale(1.0000,1.130);transform-origin:0 12.85px;-webkit-text-stroke:0.2px #1a1a1a;">log_cpm</div><div class="t" style="left:1650.00px;top:288.79px;font-size:15.44px;line-height:17.49px;font-weight:normal;color:#1a1a1a;font-family:'Liberation Mono', monospace;letter-spacing:0px;transform:scale(1.0000,1.130);transform-origin:0 12.85px;-webkit-text-stroke:0.2px #1a1a1a;">Large matrix (157680 elements,  2.7 MB)</div><svg style="position:absolute;left:2405px;top:286px" width="20" height="17" viewBox="0 0 20 17"><rect x="0.5" y="0.5" width="19" height="16" rx="2" fill="#f7f8f9" stroke="#d3d6d9"/><rect x="0.5" y="0.5" width="19" height="3" fill="#dadde0"/><path d="M4 7h5M11 7h5M4 10.5h5M11 10.5h5M4 13.5h5M11 13.5h5" stroke="#e3e5e7"/></svg><div style="position:absolute;left:1342px;top:335px;width:1104px;height:1px;background:#dfe2e6"></div><div class="t" style="left:1368.50px;top:315.73px;font-size:15.44px;line-height:17.49px;font-weight:normal;color:#1a1a1a;font-family:'Liberation Mono', monospace;letter-spacing:0px;transform:scale(1.0000,1.130);transform-origin:0 12.85px;-webkit-text-stroke:0.2px #1a1a1a;">my.contrasts</div><div class="t" style="left:1650.00px;top:315.73px;font-size:15.44px;line-height:17.49px;font-weight:normal;color:#1a1a1a;font-family:'Liberation Mono', monospace;letter-spacing:0px;transform:scale(1.0000,1.130);transform-origin:0 12.85px;-webkit-text-stroke:0.2px #1a1a1a;">num [1:4, 1:6] 1 -1 0 0 1 0 -1 0 1 0 ...</div><svg style="position:absolute;left:2405px;top:313px" width="20" height="17" viewBox="0 0 20 17"><rect x="0.5" y="0.5" width="19" height="16" rx="2" fill="#f7f8f9" stroke="#d3d6d9"/><rect x="0.5" y="0.5" width="19" height="3" fill="#dadde0"/><path d="M4 7h5M11 7h5M4 10.5h5M11 10.5h5M4 13.5h5M11 13.5h5" stroke="#e3e5e7"/></svg><div style="position:absolute;left:1342px;top:362px;width:1104px;height:1px;background:#dfe2e6"></div><svg style="position:absolute;left:1347.5px;top:340px" width="16" height="16" viewBox="0 0 16 16"><circle cx="8" cy="8" r="7.5" fill="#86a5cb"/><path d="M6 4.5L11 8L6 11.5z" fill="#eef5fb"/></svg><div class="t" style="left:1368.50px;top:342.67px;font-size:15.44px;line-height:17.49px;font-weight:normal;color:#1a1a1a;font-family:'Liberation Mono', monospace;letter-spacing:0px;transform:scale(1.0000,1.130);transform-origin:0 12.85px;-webkit-text-stroke:0.2px #1a1a1a;">mycpm</div><div class="t" style="left:1650.00px;top:342.67px;font-size:15.44px;line-height:17.49px;font-weight:normal;color:#1a1a1a;font-family:'Liberation Mono', monospace;letter-spacing:0px;transform:scale(1.0000,1.130);transform-origin:0 12.85px;-webkit-text-stroke:0.2px #1a1a1a;">Large matrix (458680 elements,  7.8 MB)</div><svg style="position:absolute;left:2405px;top:340px" width="20" height="17" viewBox="0 0 20 17"><rect x="0.5" y="0.5" width="19" height="16" rx="2" fill="#f7f8f9" stroke="#d3d6d9"/><rect x="0.5" y="0.5" width="19" height="3" fill="#dadde0"/><path d="M4 7h5M11 7h5M4 10.5h5M11 10.5h5M4 13.5h5M11 13.5h5" stroke="#e3e5e7"/></svg><div style="position:absolute;left:1342px;top:389px;width:1104px;height:1px;background:#dfe2e6"></div><svg style="position:absolute;left:1347.5px;top:367px" width="16" height="16" viewBox="0 0 16 16"><circle cx="8" cy="8" r="7.5" fill="#86a5cb"/><path d="M6 4.5L11 8L6 11.5z" fill="#eef5fb"/></svg><div class="t" style="left:1367.50px;top:369.61px;font-size:15.44px;line-height:17.49px;font-weight:normal;color:#1a1a1a;font-family:'Liberation Mono', monospace;letter-spacing:0px;transform:scale(1.0000,1.130);transform-origin:0 12.85px;-webkit-text-stroke:0.2px #1a1a1a;">p</div><div class="t" style="left:1650.00px;top:369.61px;font-size:15.44px;line-height:17.49px;font-weight:normal;color:#1a1a1a;font-family:'Liberation Mono', monospace;letter-spacing:0px;transform:scale(1.0000,1.130);transform-origin:0 12.85px;-webkit-text-stroke:0.2px #1a1a1a;">Large gg (11 elements,  2.3 MB)</div><svg style="position:absolute;left:2404px;top:368px" width="18" height="18" viewBox="0 0 18 18"><circle cx="7" cy="7" r="5" fill="none" stroke="#9a9fa4" stroke-width="2"/><path d="M10.5 10.5L15 15" stroke="#9a9fa4" stroke-width="2.6" stroke-linecap="round"/></svg><svg style="position:absolute;left:1347.5px;top:394px" width="16" height="16" viewBox="0 0 16 16"><circle cx="8" cy="8" r="7.5" fill="#86a5cb"/><path d="M6 4.5L11 8L6 11.5z" fill="#eef5fb"/></svg><div class="t" style="left:1367.50px;top:396.55px;font-size:15.44px;line-height:17.49px;font-weight:normal;color:#1a1a1a;font-family:'Liberation Mono', monospace;letter-spacing:0px;transform:scale(1.0000,1.130);transform-origin:0 12.85px;-webkit-text-stroke:0.2px #1a1a1a;">results</div><div class="t" style="left:1650.00px;top:396.55px;font-size:15.44px;line-height:17.49px;font-weight:normal;color:#1a1a1a;font-family:'Liberation Mono', monospace;letter-spacing:0px;transform:scale(1.0000,1.130);transform-origin:0 12.85px;-webkit-text-stroke:0.2px #1a1a1a;">Large list (6 elements,  13.3 MB)</div><svg style="position:absolute;left:2404px;top:395px" width="18" height="18" viewBox="0 0 18 18"><circle cx="7" cy="7" r="5" fill="none" stroke="#9a9fa4" stroke-width="2"/><path d="M10.5 10.5L15 15" stroke="#9a9fa4" stroke-width="2.6" stroke-linecap="round"/></svg><div style="position:absolute;left:1643px;top:201px;width:1px;height:215px;background:#dfe2e6"></div><div style="position:absolute;left:2446px;top:174px;width:1px;height:242px;background:#d9dde1"></div><div style="position:absolute;left:1341px;top:426px;width:1107px;height:651px;background:#fdfdfe;border:1px solid #d6d9dc;border-radius:4px;box-sizing:border-box;"></div><div style="position:absolute;left:1342px;top:427px;width:1105px;height:29px;background:#e4e6e8;border-radius:3px 3px 0 0"></div><div style="position:absolute;left:1342px;top:455px;width:1105px;height:1px;background:#d5d9dd"></div><div style="position:absolute;left:1342px;top:427px;width:56px;height:29px;background:#f1f5f8;border-radius:3px 0 0 0"></div><div style="position:absolute;left:1398px;top:427px;width:1px;height:28px;background:#d9dcdf"></div><div style="position:absolute;left:1458px;top:427px;width:1px;height:28px;background:#d9dcdf"></div><div style="position:absolute;left:1551px;top:427px;width:1px;height:28px;background:#d9dcdf"></div><div style="position:absolute;left:1608px;top:427px;width:1px;height:28px;background:#d9dcdf"></div><div style="position:absolute;left:1682px;top:427px;width:1px;height:28px;background:#d9dcdf"></div><div style="position:absolute;left:1797px;top:427px;width:1px;height:28px;background:#d9dcdf"></div><div class="t" style="left:1353.30px;top:433.03px;font-size:14.5px;line-height:16.20px;font-weight:bold;color:#1e1e1e;font-family:'Liberation Sans', sans-serif;letter-spacing:0px;transform:scale(0.9916,1.000);transform-origin:0 13.12px;-webkit-text-stroke:0.2px #1e1e1e;">Files</div><div class="t" style="left:1411.40px;top:433.03px;font-size:14.5px;line-height:16.20px;font-weight:bold;color:#1e1e1e;font-family:'Liberation Sans', sans-serif;letter-spacing:0px;transform:scale(0.9834,1.000);transform-origin:0 13.12px;-webkit-text-stroke:0.2px #1e1e1e;">Plots</div><div class="t" style="left:1471.40px;top:433.03px;font-size:14.5px;line-height:16.20px;font-weight:bold;color:#1e1e1e;font-family:'Liberation Sans', sans-serif;letter-spacing:0px;transform:scale(0.9858,1.000);transform-origin:0 13.12px;-webkit-text-stroke:0.2px #1e1e1e;">Packages</div><div class="t" style="left:1563.00px;top:433.03px;font-size:14.5px;line-height:16.20px;font-weight:bold;color:#1e1e1e;font-family:'Liberation Sans', sans-serif;letter-spacing:0px;transform:scale(1.0296,1.000);transform-origin:0 13.12px;-webkit-text-stroke:0.2px #1e1e1e;">Help</div><div class="t" style="left:1620.40px;top:433.03px;font-size:14.5px;line-height:16.20px;font-weight:bold;color:#1e1e1e;font-family:'Liberation Sans', sans-serif;letter-spacing:0px;transform:scale(1.0588,1.000);transform-origin:0 13.12px;-webkit-text-stroke:0.2px #1e1e1e;">Viewer</div><div class="t" style="left:1695.00px;top:433.03px;font-size:14.5px;line-height:16.20px;font-weight:bold;color:#1e1e1e;font-family:'Liberation Sans', sans-serif;letter-spacing:0px;transform:scale(1.0325,1.000);transform-origin:0 13.12px;-webkit-text-stroke:0.2px #1e1e1e;">Presentation</div><svg style="position:absolute;left:2394px;top:435px" width="44" height="18" viewBox="0 0 44 18"><rect x="1.5" y="8.5" width="16" height="6" rx="1.5" fill="#f4f5f6" stroke="#7d8185" stroke-width="1.4"/><rect x="1.5" y="8.5" width="16" height="2.5" fill="#7d8185"/><rect x="24.5" y="1.5" width="17" height="14" rx="1.5" fill="#eef0f2" stroke="#7d8185" stroke-width="1.4"/><rect x="24.5" y="1.5" width="17" height="2.5" fill="#7d8185"/></svg><div style="position:absolute;left:1342px;top:456px;width:1105px;height:29px;background:#f1f5f8"></div><div style="position:absolute;left:1342px;top:484px;width:1105px;height:1px;background:#d6dade"></div><svg style="position:absolute;left:1349px;top:461px" width="24" height="19" viewBox="0 0 24 19"><path d="M6 5h6l2 2h8v11H6z" fill="#f0c8b0"/><path d="M4 9h19v9H4z" fill="#eaaa68"/><circle cx="7" cy="6.5" r="6" fill="#2f9e6e"/><path d="M7 3v7M3.5 6.5h7" stroke="#e9fbf3" stroke-width="2.4"/></svg><div class="t" style="left:1377.31px;top:462.88px;font-size:15px;line-height:16.75px;font-weight:normal;color:#222;font-family:'Liberation Sans', sans-serif;letter-spacing:0px;transform:scale(0.9908,1.000);transform-origin:0 13.58px;-webkit-text-stroke:0.2px #222;">New Folder</div><div style="position:absolute;left:1468px;top:462px;width:1px;height:18px;background:#dde1e5"></div><svg style="position:absolute;left:1475px;top:461px" width="23" height="19" viewBox="0 0 23 19"><rect x="8" y="4" width="13" height="14" fill="#fbfcfd" stroke="#e3e6e9"/><circle cx="7.5" cy="7" r="6.5" fill="#2f9e6e"/><path d="M7.5 3.5v7M4 7h7" stroke="#e9fbf3" stroke-width="2.4"/></svg><div class="t" style="left:1501.71px;top:462.88px;font-size:15px;line-height:16.75px;font-weight:normal;color:#222;font-family:'Liberation Sans', sans-serif;letter-spacing:0px;transform:scale(0.9920,1.000);transform-origin:0 13.58px;-webkit-text-stroke:0.2px #222;">New Blank File</div><svg style="position:absolute;left:1610px;top:469px" width="8" height="5" viewBox="0 0 8 5"><path d="M0 0.5H7.5L3.75 4.5Z" fill="#222"/></svg><div style="position:absolute;left:1628px;top:462px;width:1px;height:18px;background:#dde1e5"></div><svg style="position:absolute;left:1636px;top:461px" width="23" height="19" viewBox="0 0 23 19"><rect x="8" y="4" width="13" height="14" fill="#fbfcfd" stroke="#dfe2e5"/><circle cx="8" cy="7.5" r="6.5" fill="#cfa45a"/><circle cx="8" cy="7.5" r="6.5" fill="none" stroke="#b98e45" stroke-width="1"/><path d="M8 4.5v6M5.8 6.8L8 4.5l2.2 2.3" stroke="#f4e2bd" stroke-width="1.6" fill="none"/></svg><div class="t" style="left:1662.98px;top:462.88px;font-size:15px;line-height:16.75px;font-weight:normal;color:#222;font-family:'Liberation Sans', sans-serif;letter-spacing:0px;transform:scale(1.0175,1.000);transform-origin:0 13.58px;-webkit-text-stroke:0.2px #222;">Upload</div><div style="position:absolute;left:1725px;top:462px;width:1px;height:18px;background:#dde1e5"></div><svg style="position:absolute;left:1733px;top:462px" width="22" height="18" viewBox="0 0 22 18"><rect x="7" y="3" width="13" height="14" fill="#fbfcfd" stroke="#e3e6e9"/><circle cx="7" cy="6.5" r="6" fill="#b52f2f"/><circle cx="7" cy="6.5" r="4.2" fill="none" stroke="#d65a5a" stroke-width="0.8"/><path d="M5 4.5L9 8.5M9 4.5L5 8.5" stroke="#f6dada" stroke-width="1.7"/></svg><div class="t" style="left:1761.50px;top:462.88px;font-size:15px;line-height:16.75px;font-weight:normal;color:#222;font-family:'Liberation Sans', sans-serif;letter-spacing:0px;transform:scale(1.0044,1.000);transform-origin:0 13.58px;-webkit-text-stroke:0.2px #222;">Delete</div><svg style="position:absolute;left:1820px;top:461px" width="22" height="20" viewBox="0 0 22 20"><path d="M1.5 5.5h8v-3h10v15h-18z" fill="#fbfcfd" stroke="#d9dcdf"/><path d="M6 11h9" stroke="#2f6fc0" stroke-width="2.2"/><path d="M13 7.5l4 3.5-4 3.5z" fill="#2f6fc0"/><circle cx="7" cy="11" r="1.6" fill="#5bc0e8"/></svg><div class="t" style="left:1845.72px;top:462.88px;font-size:15px;line-height:16.75px;font-weight:normal;color:#222;font-family:'Liberation Sans', sans-serif;letter-spacing:0px;transform:scale(0.9810,1.000);transform-origin:0 13.58px;-webkit-text-stroke:0.2px #222;">Rename</div><div style="position:absolute;left:1914px;top:462px;width:1px;height:18px;background:#dde1e5"></div><svg style="position:absolute;left:1924px;top:460px" width="22" height="22" viewBox="0 0 22 22"><circle cx="11" cy="11" r="7.8" fill="#4d9cc4"/><circle cx="11" cy="11" r="9.3" fill="none" stroke="#4a9bc6" stroke-width="2.6" stroke-dasharray="2.6 2"/><circle cx="11" cy="11" r="3.4" fill="#bfe3f0"/><circle cx="11" cy="11" r="5.6" fill="none" stroke="#6fc0dc" stroke-width="1"/></svg><div class="t" style="left:1949.96px;top:462.88px;font-size:15px;line-height:16.75px;font-weight:normal;color:#222;font-family:'Liberation Sans', sans-serif;letter-spacing:0px;transform:scale(1.0356,1.000);transform-origin:0 13.58px;-webkit-text-stroke:0.2px #222;">More</div><svg style="position:absolute;left:1992px;top:469px" width="8" height="5" viewBox="0 0 8 5"><path d="M0 0.5H7.5L3.75 4.5Z" fill="#222"/></svg><svg style="position:absolute;left:2421px;top:461px" width="22" height="22" viewBox="0 0 22 22"><path d="M16.5 6.5A7.5 7.5 0 1 0 18 12" fill="none" stroke="#c9ccd0" stroke-width="5"/><path d="M16.5 6.5A7.5 7.5 0 1 0 18 12" fill="none" stroke="#f3f5f7" stroke-width="2.6"/><path d="M11.5 1.5h8.5v8.5z" fill="#f3f5f7" stroke="#c9ccd0" stroke-width="1.2"/></svg><div style="position:absolute;left:1342px;top:485px;width:1105px;height:26px;background:#f1f5f8"></div><div style="position:absolute;left:1342px;top:511px;width:1105px;height:1px;background:#d9dde1"></div><div style="position:absolute;left:1348.5px;top:490px;width:16px;height:16px;background:#fff;border:1px solid #c9cdd1;border-radius:3px;box-sizing:border-box"></div><svg style="position:absolute;left:1367px;top:492px" width="8" height="13" viewBox="0 0 8 13"><path d="M1.5 1.5L6 6.5L1.5 11.5" fill="none" stroke="#c9ccd0" stroke-width="1.3"/></svg><div class="t" style="left:1384.00px;top:490.18px;font-size:15px;line-height:16.75px;font-weight:normal;color:#3d418f;font-family:'Liberation Sans', sans-serif;letter-spacing:0px;-webkit-text-stroke:0.2px #3d418f;">/</div><svg style="position:absolute;left:1396px;top:492px" width="8" height="13" viewBox="0 0 8 13"><path d="M1.5 1.5L6 6.5L1.5 11.5" fill="none" stroke="#c9ccd0" stroke-width="1.3"/></svg><div class="t" style="left:1412.60px;top:490.18px;font-size:15px;line-height:16.75px;font-weight:normal;color:#3d418f;font-family:'Liberation Sans', sans-serif;letter-spacing:0px;transform:scale(0.9979,1.000);transform-origin:0 13.58px;-webkit-text-stroke:0.2px #3d418f;">workspace</div><div style="position:absolute;left:2422px;top:485px;width:1px;height:26px;background:#dde1e5"></div><svg style="position:absolute;left:2429px;top:502px" width="15" height="5" viewBox="0 0 15 5"><circle cx="2" cy="2.5" r="1.3" fill="#555"/><circle cx="7.5" cy="2.5" r="1.3" fill="#555"/><circle cx="13" cy="2.5" r="1.3" fill="#555"/></svg><div style="position:absolute;left:1342px;top:512px;width:1105px;height:24px;background:#f2f5f8"></div><div style="position:absolute;left:1342px;top:536px;width:1105px;height:1px;background:#dde1e5"></div><div style="position:absolute;left:1379px;top:512px;width:1px;height:24px;background:#dde1e5"></div><div style="position:absolute;left:1412px;top:512px;width:1px;height:24px;background:#dde1e5"></div><div style="position:absolute;left:2138px;top:512px;width:1px;height:24px;background:#dde1e5"></div><div style="position:absolute;left:2240px;top:512px;width:1px;height:24px;background:#dde1e5"></div><svg style="position:absolute;left:1420px;top:519px" width="12" height="9" viewBox="0 0 12 9"><path d="M0 8.5L6 0.5L12 8.5z" fill="#6f7377"/></svg><div class="t" style="left:1437.72px;top:516.66px;font-size:14.8px;line-height:16.53px;font-weight:normal;color:#666a6e;font-family:'Liberation Sans', sans-serif;letter-spacing:0px;transform:scale(0.9806,1.000);transform-origin:0 13.39px;-webkit-text-stroke:0.2px #666a6e;">Name</div><div class="t" style="left:2141.80px;top:516.66px;font-size:14.8px;line-height:16.53px;font-weight:normal;color:#666a6e;font-family:'Liberation Sans', sans-serif;letter-spacing:0px;transform:scale(0.9525,1.000);transform-origin:0 13.39px;-webkit-text-stroke:0.2px #666a6e;">Size</div><div class="t" style="left:2243.94px;top:516.66px;font-size:14.8px;line-height:16.53px;font-weight:normal;color:#666a6e;font-family:'Liberation Sans', sans-serif;letter-spacing:0px;transform:scale(1.0585,1.000);transform-origin:0 13.39px;-webkit-text-stroke:0.2px #666a6e;">Modified</div><div style="position:absolute;left:1355.8px;top:542px;width:16px;height:16px;background:#fff;border:1px solid #c6cacd;border-radius:3px;box-sizing:border-box"></div><svg style="position:absolute;left:1388px;top:540px" width="21" height="18" viewBox="0 0 21 18"><path d="M1 3h7l2 2h10v12H1z" fill="#f3c9a6"/><path d="M1 7h19v10H1z" fill="#eeb06c"/><path d="M1 12h19v5H1z" fill="#e6a258"/></svg><div class="t" style="left:1417.80px;top:541.40px;font-size:16.3px;line-height:18.21px;font-weight:normal;color:#3a3e8a;font-family:'Liberation Sans', sans-serif;letter-spacing:0px;transform:scale(0.9561,1.000);transform-origin:0 14.75px;-webkit-text-stroke:0.25px #3a3e8a;">data</div><div style="position:absolute;left:1355.8px;top:571px;width:16px;height:16px;background:#fff;border:1px solid #c6cacd;border-radius:3px;box-sizing:border-box"></div><svg style="position:absolute;left:1388px;top:569px" width="21" height="20" viewBox="0 0 21 20"><rect x="1.5" y="1.5" width="18" height="17" rx="1" fill="#f6f7f8" stroke="#cfd3d6"/><rect x="1.5" y="1.5" width="18" height="3" fill="#dfe2e5"/><path d="M1.5 8h18M1.5 11.5h18M1.5 15h18M6 4.5v14M10.5 4.5v14M15 4.5v14" stroke="#e3e6e8" stroke-width="0.9"/></svg><div class="t" style="left:1416.83px;top:570.97px;font-size:16.3px;line-height:18.21px;font-weight:normal;color:#3a3e8a;font-family:'Liberation Sans', sans-serif;letter-spacing:0px;transform:scale(0.9722,1.000);transform-origin:0 14.75px;-webkit-text-stroke:0.25px #3a3e8a;">DE_genes_GM12878vsH1.csv</div><div class="t" style="left:2143.80px;top:570.97px;font-size:16.3px;line-height:18.21px;font-weight:normal;color:#222;font-family:'Liberation Sans', sans-serif;letter-spacing:0px;-webkit-text-stroke:0.25px #222;">2 MB</div><div class="t" style="left:2245.70px;top:570.97px;font-size:16.3px;line-height:18.21px;font-weight:normal;color:#222;font-family:'Liberation Sans', sans-serif;letter-spacing:0px;transform:scale(1.0220,1.000);transform-origin:0 14.75px;-webkit-text-stroke:0.25px #222;">Sep 23, 2024, 12:56 PM</div><div style="position:absolute;left:1355.8px;top:601px;width:16px;height:16px;background:#fff;border:1px solid #c6cacd;border-radius:3px;box-sizing:border-box"></div><svg style="position:absolute;left:1388px;top:599px" width="21" height="20" viewBox="0 0 21 20"><rect x="1.5" y="1.5" width="18" height="17" rx="1" fill="#f6f7f8" stroke="#cfd3d6"/><rect x="1.5" y="1.5" width="18" height="3" fill="#dfe2e5"/><path d="M1.5 8h18M1.5 11.5h18M1.5 15h18M6 4.5v14M10.5 4.5v14M15 4.5v14" stroke="#e3e6e8" stroke-width="0.9"/></svg><div class="t" style="left:1416.82px;top:600.54px;font-size:16.3px;line-height:18.21px;font-weight:normal;color:#3a3e8a;font-family:'Liberation Sans', sans-serif;letter-spacing:0px;transform:scale(0.9791,1.000);transform-origin:0 14.75px;-webkit-text-stroke:0.25px #3a3e8a;">DE_genes_GM12878vsK562.csv</div><div class="t" style="left:2143.80px;top:600.54px;font-size:16.3px;line-height:18.21px;font-weight:normal;color:#222;font-family:'Liberation Sans', sans-serif;letter-spacing:0px;-webkit-text-stroke:0.25px #222;">2 MB</div><div class="t" style="left:2245.70px;top:600.54px;font-size:16.3px;line-height:18.21px;font-weight:normal;color:#222;font-family:'Liberation Sans', sans-serif;letter-spacing:0px;transform:scale(1.0220,1.000);transform-origin:0 14.75px;-webkit-text-stroke:0.25px #222;">Sep 23, 2024, 12:56 PM</div><div style="position:absolute;left:1355.8px;top:630px;width:16px;height:16px;background:#fff;border:1px solid #c6cacd;border-radius:3px;box-sizing:border-box"></div><svg style="position:absolute;left:1388px;top:628px" width="21" height="20" viewBox="0 0 21 20"><rect x="1.5" y="1.5" width="18" height="17" rx="1" fill="#f6f7f8" stroke="#cfd3d6"/><rect x="1.5" y="1.5" width="18" height="3" fill="#dfe2e5"/><path d="M1.5 8h18M1.5 11.5h18M1.5 15h18M6 4.5v14M10.5 4.5v14M15 4.5v14" stroke="#e3e6e8" stroke-width="0.9"/></svg><div class="t" style="left:1416.83px;top:630.11px;font-size:16.3px;line-height:18.21px;font-weight:normal;color:#3a3e8a;font-family:'Liberation Sans', sans-serif;letter-spacing:0px;transform:scale(0.9671,1.000);transform-origin:0 14.75px;-webkit-text-stroke:0.25px #3a3e8a;">DE_genes_GM12878vsMCF7.csv</div><div class="t" style="left:2143.80px;top:630.11px;font-size:16.3px;line-height:18.21px;font-weight:normal;color:#222;font-family:'Liberation Sans', sans-serif;letter-spacing:0px;-webkit-text-stroke:0.25px #222;">2 MB</div><div class="t" style="left:2245.70px;top:630.11px;font-size:16.3px;line-height:18.21px;font-weight:normal;color:#222;font-family:'Liberation Sans', sans-serif;letter-spacing:0px;transform:scale(1.0220,1.000);transform-origin:0 14.75px;-webkit-text-stroke:0.25px #222;">Sep 23, 2024, 12:56 PM</div><div style="position:absolute;left:1355.8px;top:660px;width:16px;height:16px;background:#fff;border:1px solid #c6cacd;border-radius:3px;box-sizing:border-box"></div><svg style="position:absolute;left:1388px;top:658px" width="21" height="20" viewBox="0 0 21 20"><rect x="1.5" y="1.5" width="18" height="17" rx="1" fill="#f6f7f8" stroke="#cfd3d6"/><rect x="1.5" y="1.5" width="18" height="3" fill="#dfe2e5"/><path d="M1.5 8h18M1.5 11.5h18M1.5 15h18M6 4.5v14M10.5 4.5v14M15 4.5v14" stroke="#e3e6e8" stroke-width="0.9"/></svg><div class="t" style="left:1416.83px;top:659.68px;font-size:16.3px;line-height:18.21px;font-weight:normal;color:#3a3e8a;font-family:'Liberation Sans', sans-serif;letter-spacing:0px;transform:scale(0.9677,1.000);transform-origin:0 14.75px;-webkit-text-stroke:0.25px #3a3e8a;">DE_genes_H1vsK562.csv</div><div class="t" style="left:2143.80px;top:659.68px;font-size:16.3px;line-height:18.21px;font-weight:normal;color:#222;font-family:'Liberation Sans', sans-serif;letter-spacing:0px;-webkit-text-stroke:0.25px #222;">2 MB</div><div class="t" style="left:2245.70px;top:659.68px;font-size:16.3px;line-height:18.21px;font-weight:normal;color:#222;font-family:'Liberation Sans', sans-serif;letter-spacing:0px;transform:scale(1.0220,1.000);transform-origin:0 14.75px;-webkit-text-stroke:0.25px #222;">Sep 23, 2024, 12:56 PM</div><div style="position:absolute;left:1355.8px;top:689px;width:16px;height:16px;background:#fff;border:1px solid #c6cacd;border-radius:3px;box-sizing:border-box"></div><svg style="position:absolute;left:1388px;top:687px" width="21" height="20" viewBox="0 0 21 20"><rect x="1.5" y="1.5" width="18" height="17" rx="1" fill="#f6f7f8" stroke="#cfd3d6"/><rect x="1.5" y="1.5" width="18" height="3" fill="#dfe2e5"/><path d="M1.5 8h18M1.5 11.5h18M1.5 15h18M6 4.5v14M10.5 4.5v14M15 4.5v14" stroke="#e3e6e8" stroke-width="0.9"/></svg><div class="t" style="left:1416.85px;top:689.25px;font-size:16.3px;line-height:18.21px;font-weight:normal;color:#3a3e8a;font-family:'Liberation Sans', sans-serif;letter-spacing:0px;transform:scale(0.9498,1.000);transform-origin:0 14.75px;-webkit-text-stroke:0.25px #3a3e8a;">DE_genes_H1vsMCF7.csv</div><div class="t" style="left:2143.80px;top:689.25px;font-size:16.3px;line-height:18.21px;font-weight:normal;color:#222;font-family:'Liberation Sans', sans-serif;letter-spacing:0px;-webkit-text-stroke:0.25px #222;">2.1 MB</div><div class="t" style="left:2245.70px;top:689.25px;font-size:16.3px;line-height:18.21px;font-weight:normal;color:#222;font-family:'Liberation Sans', sans-serif;letter-spacing:0px;transform:scale(1.0220,1.000);transform-origin:0 14.75px;-webkit-text-stroke:0.25px #222;">Sep 23, 2024, 12:56 PM</div><div style="position:absolute;left:1355.8px;top:719px;width:16px;height:16px;background:#fff;border:1px solid #c6cacd;border-radius:3px;box-sizing:border-box"></div><svg style="position:absolute;left:1388px;top:717px" width="21" height="20" viewBox="0 0 21 20"><rect x="1.5" y="1.5" width="18" height="17" rx="1" fill="#f6f7f8" stroke="#cfd3d6"/><rect x="1.5" y="1.5" width="18" height="3" fill="#dfe2e5"/><path d="M1.5 8h18M1.5 11.5h18M1.5 15h18M6 4.5v14M10.5 4.5v14M15 4.5v14" stroke="#e3e6e8" stroke-width="0.9"/></svg><div class="t" style="left:1416.84px;top:718.82px;font-size:16.3px;line-height:18.21px;font-weight:normal;color:#3a3e8a;font-family:'Liberation Sans', sans-serif;letter-spacing:0px;transform:scale(0.9623,1.000);transform-origin:0 14.75px;-webkit-text-stroke:0.25px #3a3e8a;">DE_genes_K562vsMCF7.csv</div><div class="t" style="left:2143.80px;top:718.82px;font-size:16.3px;line-height:18.21px;font-weight:normal;color:#222;font-family:'Liberation Sans', sans-serif;letter-spacing:0px;-webkit-text-stroke:0.25px #222;">2 MB</div><div class="t" style="left:2245.70px;top:718.82px;font-size:16.3px;line-height:18.21px;font-weight:normal;color:#222;font-family:'Liberation Sans', sans-serif;letter-spacing:0px;transform:scale(1.0220,1.000);transform-origin:0 14.75px;-webkit-text-stroke:0.25px #222;">Sep 23, 2024, 12:56 PM</div><div style="position:absolute;left:1355.8px;top:748px;width:16px;height:16px;background:#fff;border:1px solid #c6cacd;border-radius:3px;box-sizing:border-box"></div><svg style="position:absolute;left:1388px;top:746px" width="21" height="20" viewBox="0 0 21 20"><rect x="0.5" y="0.5" width="19.5" height="18.5" fill="#f4f6f8" stroke="#c9cdd1"/><rect x="1.5" y="1.5" width="17.5" height="9.5" fill="#a9d0ee"/><path d="M1.5 1.5h5l3 3-2 3-5 1z" fill="#4f7fb8"/><path d="M1.5 4h3v2h-3z" fill="#1f3f6f"/><path d="M1.5 11h17.5v4.5H1.5z" fill="#e2b36c"/><path d="M1.5 11.5c3-1 6 0 9-0.5s5-0.5 8.5 0" stroke="#9fd07a" stroke-width="0.8" fill="none"/><path d="M3 13h4" stroke="#b04040" stroke-width="1.2"/><path d="M1.5 15.5h17.5v3H1.5z" fill="#fbfbfc"/></svg><div class="t" style="left:1416.80px;top:748.39px;font-size:16.3px;line-height:18.21px;font-weight:normal;color:#3a3e8a;font-family:'Liberation Sans', sans-serif;letter-spacing:0px;transform:scale(0.9987,1.000);transform-origin:0 14.75px;-webkit-text-stroke:0.25px #3a3e8a;">heatmap_top_DE_genes.png</div><div class="t" style="left:2143.80px;top:748.39px;font-size:16.3px;line-height:18.21px;font-weight:normal;color:#222;font-family:'Liberation Sans', sans-serif;letter-spacing:0px;-webkit-text-stroke:0.25px #222;">26.8 KB</div><div class="t" style="left:2245.70px;top:748.39px;font-size:16.3px;line-height:18.21px;font-weight:normal;color:#222;font-family:'Liberation Sans', sans-serif;letter-spacing:0px;transform:scale(1.0220,1.000);transform-origin:0 14.75px;-webkit-text-stroke:0.25px #222;">Sep 23, 2024, 12:56 PM</div><div style="position:absolute;left:1355.8px;top:778px;width:16px;height:16px;background:#fff;border:1px solid #c6cacd;border-radius:3px;box-sizing:border-box"></div><svg style="position:absolute;left:1388px;top:776px" width="21" height="20" viewBox="0 0 21 20"><rect x="0.5" y="0.5" width="19.5" height="18.5" fill="#f4f6f8" stroke="#c9cdd1"/><rect x="1.5" y="1.5" width="17.5" height="9.5" fill="#a9d0ee"/><path d="M1.5 1.5h5l3 3-2 3-5 1z" fill="#4f7fb8"/><path d="M1.5 4h3v2h-3z" fill="#1f3f6f"/><path d="M1.5 11h17.5v4.5H1.5z" fill="#e2b36c"/><path d="M1.5 11.5c3-1 6 0 9-0.5s5-0.5 8.5 0" stroke="#9fd07a" stroke-width="0.8" fill="none"/><path d="M3 13h4" stroke="#b04040" stroke-width="1.2"/><path d="M1.5 15.5h17.5v3H1.5z" fill="#fbfbfc"/></svg><div class="t" style="left:1416.78px;top:777.96px;font-size:16.3px;line-height:18.21px;font-weight:normal;color:#3a3e8a;font-family:'Liberation Sans', sans-serif;letter-spacing:0px;transform:scale(1.0176,1.000);transform-origin:0 14.75px;-webkit-text-stroke:0.25px #3a3e8a;">MDS_plot.png</div><div class="t" style="left:2142.80px;top:777.96px;font-size:16.3px;line-height:18.21px;font-weight:normal;color:#222;font-family:'Liberation Sans', sans-serif;letter-spacing:0px;-webkit-text-stroke:0.25px #222;">16.4 KB</div><div class="t" style="left:2245.70px;top:777.96px;font-size:16.3px;line-height:18.21px;font-weight:normal;color:#222;font-family:'Liberation Sans', sans-serif;letter-spacing:0px;transform:scale(1.0220,1.000);transform-origin:0 14.75px;-webkit-text-stroke:0.25px #222;">Sep 23, 2024, 12:56 PM</div><div style="position:absolute;left:1355.8px;top:808px;width:16px;height:16px;background:#fff;border:1px solid #c6cacd;border-radius:3px;box-sizing:border-box"></div><svg style="position:absolute;left:1388px;top:805px" width="21" height="20" viewBox="0 0 21 20"><rect x="0.5" y="0.5" width="19.5" height="18.5" fill="#f4f6f8" stroke="#c9cdd1"/><rect x="1.5" y="1.5" width="17.5" height="9.5" fill="#a9d0ee"/><path d="M1.5 1.5h5l3 3-2 3-5 1z" fill="#4f7fb8"/><path d="M1.5 4h3v2h-3z" fill="#1f3f6f"/><path d="M1.5 11h17.5v4.5H1.5z" fill="#e2b36c"/><path d="M1.5 11.5c3-1 6 0 9-0.5s5-0.5 8.5 0" stroke="#9fd07a" stroke-width="0.8" fill="none"/><path d="M3 13h4" stroke="#b04040" stroke-width="1.2"/><path d="M1.5 15.5h17.5v3H1.5z" fill="#fbfbfc"/></svg><div class="t" style="left:1417.80px;top:807.53px;font-size:16.3px;line-height:18.21px;font-weight:normal;color:#3a3e8a;font-family:'Liberation Sans', sans-serif;letter-spacing:0px;transform:scale(1.0200,1.000);transform-origin:0 14.75px;-webkit-text-stroke:0.25px #3a3e8a;">volcano_plot_GM12878vsH1.png</div><div class="t" style="left:2143.80px;top:807.53px;font-size:16.3px;line-height:18.21px;font-weight:normal;color:#222;font-family:'Liberation Sans', sans-serif;letter-spacing:0px;-webkit-text-stroke:0.25px #222;">438.2 KB</div><div class="t" style="left:2245.70px;top:807.53px;font-size:16.3px;line-height:18.21px;font-weight:normal;color:#222;font-family:'Liberation Sans', sans-serif;letter-spacing:0px;transform:scale(1.0220,1.000);transform-origin:0 14.75px;-webkit-text-stroke:0.25px #222;">Sep 23, 2024, 12:56 PM</div><div style="position:absolute;left:1355.8px;top:837px;width:16px;height:16px;background:#fff;border:1px solid #c6cacd;border-radius:3px;box-sizing:border-box"></div><svg style="position:absolute;left:1388px;top:835px" width="21" height="20" viewBox="0 0 21 20"><rect x="0.5" y="0.5" width="19.5" height="18.5" fill="#f4f6f8" stroke="#c9cdd1"/><rect x="1.5" y="1.5" width="17.5" height="9.5" fill="#a9d0ee"/><path d="M1.5 1.5h5l3 3-2 3-5 1z" fill="#4f7fb8"/><path d="M1.5 4h3v2h-3z" fill="#1f3f6f"/><path d="M1.5 11h17.5v4.5H1.5z" fill="#e2b36c"/><path d="M1.5 11.5c3-1 6 0 9-0.5s5-0.5 8.5 0" stroke="#9fd07a" stroke-width="0.8" fill="none"/><path d="M3 13h4" stroke="#b04040" stroke-width="1.2"/><path d="M1.5 15.5h17.5v3H1.5z" fill="#fbfbfc"/></svg><div class="t" style="left:1417.80px;top:837.10px;font-size:16.3px;line-height:18.21px;font-weight:normal;color:#3a3e8a;font-family:'Liberation Sans', sans-serif;letter-spacing:0px;transform:scale(1.0233,1.000);transform-origin:0 14.75px;-webkit-text-stroke:0.25px #3a3e8a;">volcano_plot_GM12878vsK562.png</div><div class="t" style="left:2143.80px;top:837.10px;font-size:16.3px;line-height:18.21px;font-weight:normal;color:#222;font-family:'Liberation Sans', sans-serif;letter-spacing:0px;-webkit-text-stroke:0.25px #222;">479.4 KB</div><div class="t" style="left:2245.70px;top:837.10px;font-size:16.3px;line-height:18.21px;font-weight:normal;color:#222;font-family:'Liberation Sans', sans-serif;letter-spacing:0px;transform:scale(1.0220,1.000);transform-origin:0 14.75px;-webkit-text-stroke:0.25px #222;">Sep 23, 2024, 12:56 PM</div><div style="position:absolute;left:1355.8px;top:867px;width:16px;height:16px;background:#fff;border:1px solid #c6cacd;border-radius:3px;box-sizing:border-box"></div><svg style="position:absolute;left:1388px;top:864px" width="21" height="20" viewBox="0 0 21 20"><rect x="0.5" y="0.5" width="19.5" height="18.5" fill="#f4f6f8" stroke="#c9cdd1"/><rect x="1.5" y="1.5" width="17.5" height="9.5" fill="#a9d0ee"/><path d="M1.5 1.5h5l3 3-2 3-5 1z" fill="#4f7fb8"/><path d="M1.5 4h3v2h-3z" fill="#1f3f6f"/><path d="M1.5 11h17.5v4.5H1.5z" fill="#e2b36c"/><path d="M1.5 11.5c3-1 6 0 9-0.5s5-0.5 8.5 0" stroke="#9fd07a" stroke-width="0.8" fill="none"/><path d="M3 13h4" stroke="#b04040" stroke-width="1.2"/><path d="M1.5 15.5h17.5v3H1.5z" fill="#fbfbfc"/></svg><div class="t" style="left:1417.80px;top:866.67px;font-size:16.3px;line-height:18.21px;font-weight:normal;color:#3a3e8a;font-family:'Liberation Sans', sans-serif;letter-spacing:0px;transform:scale(1.0087,1.000);transform-origin:0 14.75px;-webkit-text-stroke:0.25px #3a3e8a;">volcano_plot_GM12878vsMCF7.png</div><div class="t" style="left:2143.80px;top:866.67px;font-size:16.3px;line-height:18.21px;font-weight:normal;color:#222;font-family:'Liberation Sans', sans-serif;letter-spacing:0px;-webkit-text-stroke:0.25px #222;">455.4 KB</div><div class="t" style="left:2245.70px;top:866.67px;font-size:16.3px;line-height:18.21px;font-weight:normal;color:#222;font-family:'Liberation Sans', sans-serif;letter-spacing:0px;transform:scale(1.0220,1.000);transform-origin:0 14.75px;-webkit-text-stroke:0.25px #222;">Sep 23, 2024, 12:56 PM</div><div style="position:absolute;left:1355.8px;top:896px;width:16px;height:16px;background:#fff;border:1px solid #c6cacd;border-radius:3px;box-sizing:border-box"></div><svg style="position:absolute;left:1388px;top:894px" width="21" height="20" viewBox="0 0 21 20"><rect x="0.5" y="0.5" width="19.5" height="18.5" fill="#f4f6f8" stroke="#c9cdd1"/><rect x="1.5" y="1.5" width="17.5" height="9.5" fill="#a9d0ee"/><path d="M1.5 1.5h5l3 3-2 3-5 1z" fill="#4f7fb8"/><path d="M1.5 4h3v2h-3z" fill="#1f3f6f"/><path d="M1.5 11h17.5v4.5H1.5z" fill="#e2b36c"/><path d="M1.5 11.5c3-1 6 0 9-0.5s5-0.5 8.5 0" stroke="#9fd07a" stroke-width="0.8" fill="none"/><path d="M3 13h4" stroke="#b04040" stroke-width="1.2"/><path d="M1.5 15.5h17.5v3H1.5z" fill="#fbfbfc"/></svg><div class="t" style="left:1417.80px;top:896.24px;font-size:16.3px;line-height:18.21px;font-weight:normal;color:#3a3e8a;font-family:'Liberation Sans', sans-serif;letter-spacing:0px;transform:scale(1.0207,1.000);transform-origin:0 14.75px;-webkit-text-stroke:0.25px #3a3e8a;">volcano_plot_H1vsK562.png</div><div class="t" style="left:2143.80px;top:896.24px;font-size:16.3px;line-height:18.21px;font-weight:normal;color:#222;font-family:'Liberation Sans', sans-serif;letter-spacing:0px;-webkit-text-stroke:0.25px #222;">439.7 KB</div><div class="t" style="left:2245.70px;top:896.24px;font-size:16.3px;line-height:18.21px;font-weight:normal;color:#222;font-family:'Liberation Sans', sans-serif;letter-spacing:0px;transform:scale(1.0220,1.000);transform-origin:0 14.75px;-webkit-text-stroke:0.25px #222;">Sep 23, 2024, 12:56 PM</div><div style="position:absolute;left:1355.8px;top:926px;width:16px;height:16px;background:#fff;border:1px solid #c6cacd;border-radius:3px;box-sizing:border-box"></div><svg style="position:absolute;left:1388px;top:923px" width="21" height="20" viewBox="0 0 21 20"><rect x="0.5" y="0.5" width="19.5" height="18.5" fill="#f4f6f8" stroke="#c9cdd1"/><rect x="1.5" y="1.5" width="17.5" height="9.5" fill="#a9d0ee"/><path d="M1.5 1.5h5l3 3-2 3-5 1z" fill="#4f7fb8"/><path d="M1.5 4h3v2h-3z" fill="#1f3f6f"/><path d="M1.5 11h17.5v4.5H1.5z" fill="#e2b36c"/><path d="M1.5 11.5c3-1 6 0 9-0.5s5-0.5 8.5 0" stroke="#9fd07a" stroke-width="0.8" fill="none"/><path d="M3 13h4" stroke="#b04040" stroke-width="1.2"/><path d="M1.5 15.5h17.5v3H1.5z" fill="#fbfbfc"/></svg><div class="t" style="left:1417.80px;top:925.81px;font-size:16.3px;line-height:18.21px;font-weight:normal;color:#3a3e8a;font-family:'Liberation Sans', sans-serif;letter-spacing:0px;transform:scale(1.0018,1.000);transform-origin:0 14.75px;-webkit-text-stroke:0.25px #3a3e8a;">volcano_plot_H1vsMCF7.png</div><div class="t" style="left:2143.80px;top:925.81px;font-size:16.3px;line-height:18.21px;font-weight:normal;color:#222;font-family:'Liberation Sans', sans-serif;letter-spacing:0px;-webkit-text-stroke:0.25px #222;">390.3 KB</div><div class="t" style="left:2245.70px;top:925.81px;font-size:16.3px;line-height:18.21px;font-weight:normal;color:#222;font-family:'Liberation Sans', sans-serif;letter-spacing:0px;transform:scale(1.0220,1.000);transform-origin:0 14.75px;-webkit-text-stroke:0.25px #222;">Sep 23, 2024, 12:56 PM</div><div style="position:absolute;left:1355.8px;top:955px;width:16px;height:16px;background:#fff;border:1px solid #c6cacd;border-radius:3px;box-sizing:border-box"></div><svg style="position:absolute;left:1388px;top:953px" width="21" height="20" viewBox="0 0 21 20"><rect x="0.5" y="0.5" width="19.5" height="18.5" fill="#f4f6f8" stroke="#c9cdd1"/><rect x="1.5" y="1.5" width="17.5" height="9.5" fill="#a9d0ee"/><path d="M1.5 1.5h5l3 3-2 3-5 1z" fill="#4f7fb8"/><path d="M1.5 4h3v2h-3z" fill="#1f3f6f"/><path d="M1.5 11h17.5v4.5H1.5z" fill="#e2b36c"/><path d="M1.5 11.5c3-1 6 0 9-0.5s5-0.5 8.5 0" stroke="#9fd07a" stroke-width="0.8" fill="none"/><path d="M3 13h4" stroke="#b04040" stroke-width="1.2"/><path d="M1.5 15.5h17.5v3H1.5z" fill="#fbfbfc"/></svg><div class="t" style="left:1417.80px;top:955.38px;font-size:16.3px;line-height:18.21px;font-weight:normal;color:#3a3e8a;font-family:'Liberation Sans', sans-serif;letter-spacing:0px;transform:scale(1.0064,1.000);transform-origin:0 14.75px;-webkit-text-stroke:0.25px #3a3e8a;">volcano_plot_K562vsMCF7.png</div><div class="t" style="left:2143.80px;top:955.38px;font-size:16.3px;line-height:18.21px;font-weight:normal;color:#222;font-family:'Liberation Sans', sans-serif;letter-spacing:0px;-webkit-text-stroke:0.25px #222;">463.4 KB</div><div class="t" style="left:2245.70px;top:955.38px;font-size:16.3px;line-height:18.21px;font-weight:normal;color:#222;font-family:'Liberation Sans', sans-serif;letter-spacing:0px;transform:scale(1.0220,1.000);transform-origin:0 14.75px;-webkit-text-stroke:0.25px #222;">Sep 23, 2024, 12:56 PM</div><svg style="position:absolute;left:1195px;top:455px" width="60" height="70" viewBox="0 0 60 70"><defs><filter id="sh" x="-30%" y="-30%" width="160%" height="160%"><feGaussianBlur stdDeviation="1.8"/></filter></defs><path d="M12 7.8V50.5L21.1 42.1L27.7 57.8L37.3 53.5L32.8 39.4L45.1 38.5Z" fill="#000" opacity="0.45" filter="url(#sh)" transform="translate(1,2.5)"/><path d="M12 7.8V50.5L21.1 42.1L27.7 57.8L37.3 53.5L32.8 39.4L45.1 38.5Z" fill="#fff"/><path d="M14.7 12.6V43.9L21.4 37.9L29.5 53.5L34 51.4L28.3 36.7L37.9 35.5Z" fill="#000"/></svg></body></html>
